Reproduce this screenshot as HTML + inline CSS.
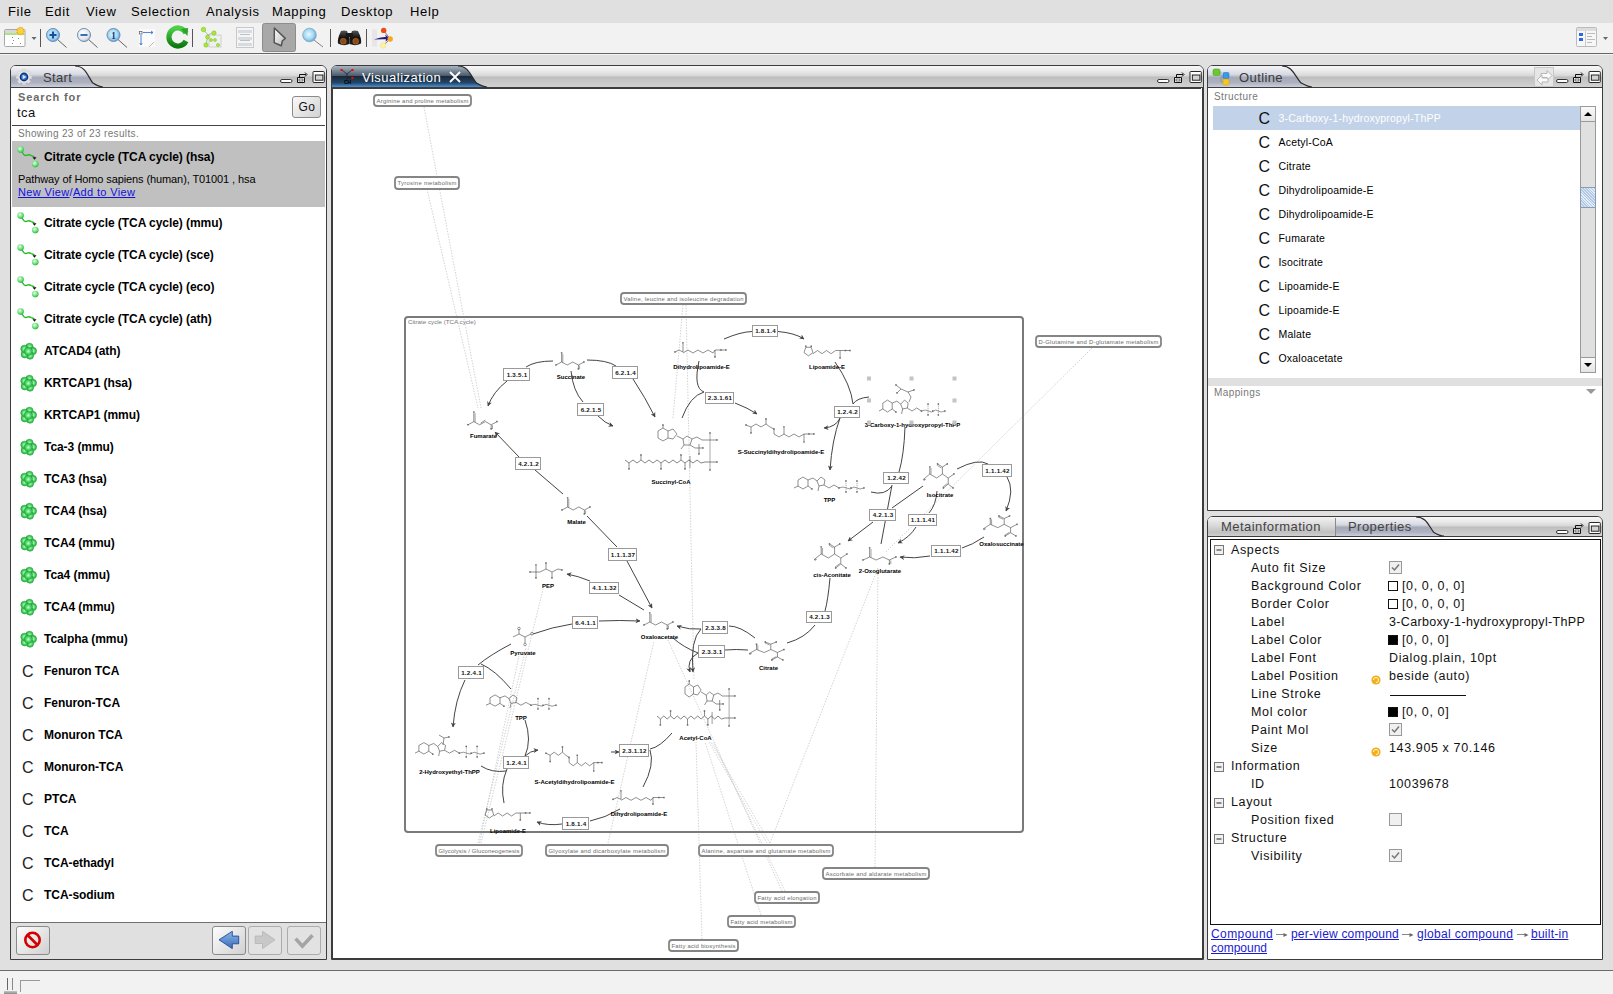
<!DOCTYPE html><html><head><meta charset="utf-8"><style>
*{margin:0;padding:0;box-sizing:border-box}
html,body{width:1613px;height:994px;overflow:hidden;background:#e0e0e0;font-family:"Liberation Sans",sans-serif;position:relative}
.a{position:absolute}
.t{position:absolute;line-height:1;white-space:pre}
svg{position:absolute;overflow:visible}
.hdr{position:absolute;background:linear-gradient(#f8f8f8 0%,#e6e6e6 30%,#d6d6d6 48%,#bdbdbd 52%,#c6c6c6 70%,#d2d2d2 100%)}
.tab{position:absolute}
.btn{position:absolute;border:1px solid #8a8a8a;border-radius:3px;background:linear-gradient(#fbfbfb,#d6d6d6)}
</style></head><body>
<div class="a" style="left:0px;top:0px;width:1613px;height:23px;background:#e0e0e0"></div>
<div class="t" style="left:8px;top:5.00px;font-size:13px;color:#000;letter-spacing:0.65px;">File</div>
<div class="t" style="left:45px;top:5.00px;font-size:13px;color:#000;letter-spacing:0.65px;">Edit</div>
<div class="t" style="left:86px;top:5.00px;font-size:13px;color:#000;letter-spacing:0.65px;">View</div>
<div class="t" style="left:131px;top:5.00px;font-size:13px;color:#000;letter-spacing:0.65px;">Selection</div>
<div class="t" style="left:206px;top:5.00px;font-size:13px;color:#000;letter-spacing:0.65px;">Analysis</div>
<div class="t" style="left:272px;top:5.00px;font-size:13px;color:#000;letter-spacing:0.65px;">Mapping</div>
<div class="t" style="left:341px;top:5.00px;font-size:13px;color:#000;letter-spacing:0.65px;">Desktop</div>
<div class="t" style="left:410px;top:5.00px;font-size:13px;color:#000;letter-spacing:0.65px;">Help</div>
<div class="a" style="left:0px;top:23px;width:1613px;height:30px;background:#f2f2f2"></div>
<div class="a" style="left:0px;top:53px;width:1613px;height:1px;background:#666"></div>
<div class="a" style="left:0px;top:54px;width:1613px;height:1px;background:#f4f4f4"></div>
<svg width="1613" height="55" style="left:0;top:0" viewBox="0 0 1613 55"><defs><radialGradient id="lens" cx="45%" cy="45%" r="60%"><stop offset="0" stop-color="#e8f8ff"/><stop offset="0.6" stop-color="#a0d8f4"/><stop offset="1" stop-color="#5a90d0"/></radialGradient><radialGradient id="lens2" cx="40%" cy="35%" r="70%"><stop offset="0" stop-color="#ffffff"/><stop offset="0.7" stop-color="#dde6f0"/><stop offset="1" stop-color="#9aaabb"/></radialGradient><linearGradient id="grn" x1="0" y1="0" x2="0" y2="1"><stop offset="0" stop-color="#4fd04a"/><stop offset="1" stop-color="#0d7a10"/></linearGradient><linearGradient id="selb" x1="0" y1="0" x2="0" y2="1"><stop offset="0" stop-color="#b0b0b0"/><stop offset="1" stop-color="#a4a4a4"/></linearGradient></defs><rect x="4.5" y="29.5" width="20.5" height="17" rx="1" fill="#fff" stroke="#a8a8a8"/><rect x="5" y="30" width="20" height="3" fill="#d8d8d8"/><line x1="5" y1="34" x2="24.5" y2="34" stroke="#7ad030" stroke-width="1.2"/><circle cx="20.5" cy="31" r="3.6" fill="#f7d23a" stroke="#e6a21a" stroke-width="1.2" stroke-dasharray="1.2 1"/><rect x="12" y="37" width="1" height="1" fill="#888"/><rect x="13" y="40" width="1" height="1" fill="#888"/><rect x="12" y="43" width="1" height="1" fill="#888"/><rect x="20" y="43" width="1" height="1" fill="#888"/><rect x="18" y="38" width="1" height="1" fill="#888"/><path d="M31.5 37 h5 l-2.5 3z" fill="#666"/><line x1="40.5" y1="29" x2="40.5" y2="47" stroke="#555"/><line x1="192.5" y1="29" x2="192.5" y2="47" stroke="#555"/><line x1="330.5" y1="29" x2="330.5" y2="47" stroke="#555"/><line x1="366.5" y1="29" x2="366.5" y2="47" stroke="#555"/><line x1="57" y1="39" x2="66.5" y2="47.5" stroke="#555" stroke-width="0.9"/><circle cx="53" cy="35" r="6.5" fill="url(#lens)" stroke="#6f8fb0" stroke-width="1"/><path d="M49.5 35h7M53 31.5v7" stroke="#1a4fa0" stroke-width="2.2"/><line x1="88" y1="39" x2="97.5" y2="47.5" stroke="#555" stroke-width="0.9"/><circle cx="84" cy="35" r="6.5" fill="url(#lens2)" stroke="#6f8fb0" stroke-width="1"/><path d="M80.5 35h7" stroke="#3c6fb0" stroke-width="2"/><line x1="117.5" y1="39" x2="127.0" y2="47.5" stroke="#555" stroke-width="0.9"/><circle cx="113.5" cy="35" r="6.5" fill="url(#lens)" stroke="#6f8fb0" stroke-width="1"/><text x="113.5" y="39" font-size="10" font-weight="bold" text-anchor="middle" fill="#1a3f80" font-family="Liberation Serif">1</text><rect x="139" y="29" width="16" height="18" fill="#fafafa"/><rect x="139.5" y="31.5" width="2.5" height="2.5" fill="#fff" stroke="#666" stroke-width="0.8"/><path d="M143 32.5h10M151 31l2 1.5-2 1.5M141 35v10M139.8 43l1.2 2 1.2-2" stroke="#3a7ad8" fill="none" stroke-width="0.9"/><path d="M149 47l5-5" stroke="#aaa" stroke-width="0.8"/><path d="M186 33 A9 9 0 1 0 186 41" fill="none" stroke="url(#grn)" stroke-width="5.2"/><path d="M181 29 L188 28 L187.5 36 Z" fill="#2aa52a"/><circle cx="177" cy="38" r="3" fill="#f2f2f2"/><path d="M203 29 L208 35 L212 33 M208 35 L206 45 M208 35 L214 40" stroke="#9a9" stroke-width="0.8" fill="none"/><rect x="209" y="35" width="12" height="12" fill="#f0f0f0" stroke="#bbb" stroke-width="0.6"/><circle cx="203.5" cy="29.5" r="2.3" fill="#a8e83a" stroke="#7ac020" stroke-width="0.5"/><circle cx="214" cy="33" r="2.2" fill="#a8e83a" stroke="#7ac020" stroke-width="0.5"/><circle cx="207.5" cy="37" r="2" fill="#a8e83a" stroke="#7ac020" stroke-width="0.5"/><circle cx="206" cy="45" r="2.2" fill="#a8e83a" stroke="#7ac020" stroke-width="0.5"/><circle cx="211" cy="40" r="1.5" fill="#a8e83a" stroke="#7ac020" stroke-width="0.5"/><circle cx="218" cy="45" r="1.6" fill="#a8e83a" stroke="#7ac020" stroke-width="0.5"/><circle cx="215" cy="40" r="1.5" fill="#a8e83a" stroke="#7ac020" stroke-width="0.5"/><rect x="236.5" y="27.5" width="17" height="20" fill="#f5f5f5" stroke="#c8c8c8"/><rect x="238" y="30" width="14" height="3" fill="#d6dbe2"/><rect x="238" y="37" width="14" height="3" fill="#d6dbe2"/><rect x="238" y="43" width="14" height="3" fill="#d6dbe2"/><rect x="240" y="34" width="10" height="1" fill="#c0c0c0"/><rect x="240" y="40" width="10" height="1" fill="#c0c0c0"/><rect x="262.5" y="23.5" width="33" height="28" rx="2" fill="#a8a8a8" stroke="#8c8c8c"/><defs><linearGradient id="ptr" x1="0" y1="0" x2="1" y2="1"><stop offset="0" stop-color="#ffffff"/><stop offset="1" stop-color="#b8b8b8"/></linearGradient></defs><path d="M274.4 28 L285.3 38.4 L282.3 41 L281.3 45.8 L277.8 44.2 L274.2 42.6 Z" fill="url(#ptr)" stroke="#555" stroke-width="1.5" stroke-linejoin="round"/><line x1="314" y1="40" x2="323" y2="47" stroke="#777" stroke-width="0.9"/><circle cx="309.5" cy="35" r="6.8" fill="url(#lens)" stroke="#8ab" stroke-width="0.8"/><defs><linearGradient id="bino" x1="0" y1="0" x2="0" y2="1"><stop offset="0" stop-color="#555"/><stop offset="0.5" stop-color="#111"/><stop offset="1" stop-color="#222"/></linearGradient></defs><path d="M341 31 Q344 30 347 31 L349.5 38 L349.5 44 Q343.5 46.5 338 43.5 Q337 39 341 31 Z" fill="url(#bino)"/><path d="M352 31 Q355 30 358 31 Q362 39 361 43.5 Q355.5 46.5 349.5 44 L349.5 38 Z" fill="url(#bino)"/><rect x="346" y="33" width="7" height="4" fill="#1a1a1a"/><circle cx="343.3" cy="41.2" r="2.9" fill="#8a4a18" stroke="#c07030" stroke-width="0.6"/><circle cx="355.7" cy="41.2" r="2.9" fill="#8a4a18" stroke="#c07030" stroke-width="0.6"/><rect x="372" y="29.5" width="5" height="17" fill="#e6e6e6"/><path d="M383.7 30.4 L390.2 39 L383.2 45.5" stroke="#333" stroke-width="0.6" fill="none"/><path d="M374 39.5 Q381 36.5 386 37 L385 34.5 L390 38.5 L385.5 41.5 L386 39.2 Q380 39 374 39.5 Z" fill="#2a1a80"/><circle cx="383.7" cy="30.4" r="2.7" fill="#f04a10"/><circle cx="390.2" cy="39" r="2.7" fill="#f5a820"/><circle cx="383.2" cy="45.5" r="2.8" fill="#fbf3a0" stroke="#e8d870" stroke-width="0.4"/><rect x="1576.5" y="27.5" width="20" height="19" rx="1" fill="#f7f7f7" stroke="#bbb"/><rect x="1577" y="28" width="19" height="3" fill="#ddd"/><rect x="1579" y="33" width="4" height="3" fill="#2a6ae0"/><rect x="1579" y="38" width="4" height="3" fill="#2a6ae0"/><line x1="1585.5" y1="31" x2="1585.5" y2="46" stroke="#ccc"/><rect x="1587" y="33" width="8" height="1" fill="#bbb"/><rect x="1587" y="36" width="5" height="1" fill="#bbb"/><rect x="1587" y="39" width="8" height="1" fill="#bbb"/><rect x="1587" y="42" width="5" height="1" fill="#bbb"/><path d="M1603 37 h5 l-2.5 3z" fill="#666"/></svg>
<div class="a" style="left:10px;top:65px;width:317px;height:895px;border:1px solid #3c3c3c;border-radius:6px 6px 0 0;background:#fff;overflow:hidden"><div class="hdr" style="left:0;top:0;width:315px;height:22px;border-bottom:1px solid #3c3c3c"></div></div>
<svg width="96" height="21" style="left:11px;top:66px" viewBox="0 0 96 21"><defs><linearGradient id="tgs" x1="0" y1="0" x2="0" y2="1"><stop offset="0" stop-color="#f4f4f8"/><stop offset="0.4" stop-color="#d8dae2"/><stop offset="0.55" stop-color="#a6aab8"/><stop offset="0.8" stop-color="#aeb2c0"/><stop offset="1" stop-color="#ccd0dc"/></linearGradient></defs><path d="M0 21 V5 Q0 0 5 0 H64 C74 0 76 8.4 81.6 16.8 Q88 21 92 21 Z" fill="url(#tgs)"/><path d="M64 0 C74 0 76 8.4 81.6 16.8 Q88 21 92 21" fill="none" stroke="#2a2a2a" stroke-width="1.2"/></svg>
<svg width="20" height="20" style="left:14px;top:67px" viewBox="0 0 20 20"><rect x="8.3" y="2.2" width="3.4" height="4" fill="#e6e6e6" stroke="#c4c4c4" stroke-width="0.5" transform="rotate(0 10 10)"/><rect x="8.3" y="2.2" width="3.4" height="4" fill="#e6e6e6" stroke="#c4c4c4" stroke-width="0.5" transform="rotate(45 10 10)"/><rect x="8.3" y="2.2" width="3.4" height="4" fill="#e6e6e6" stroke="#c4c4c4" stroke-width="0.5" transform="rotate(90 10 10)"/><rect x="8.3" y="2.2" width="3.4" height="4" fill="#e6e6e6" stroke="#c4c4c4" stroke-width="0.5" transform="rotate(135 10 10)"/><rect x="8.3" y="2.2" width="3.4" height="4" fill="#e6e6e6" stroke="#c4c4c4" stroke-width="0.5" transform="rotate(180 10 10)"/><rect x="8.3" y="2.2" width="3.4" height="4" fill="#e6e6e6" stroke="#c4c4c4" stroke-width="0.5" transform="rotate(225 10 10)"/><rect x="8.3" y="2.2" width="3.4" height="4" fill="#e6e6e6" stroke="#c4c4c4" stroke-width="0.5" transform="rotate(270 10 10)"/><rect x="8.3" y="2.2" width="3.4" height="4" fill="#e6e6e6" stroke="#c4c4c4" stroke-width="0.5" transform="rotate(315 10 10)"/><circle cx="10" cy="10" r="6" fill="#ececec" stroke="#c8c8c8" stroke-width="0.5"/><circle cx="10" cy="10" r="4.4" fill="#0a3580"/><circle cx="10" cy="10" r="2.9" fill="#3a70c0"/><path d="M8.6 7.8 L12.4 10 L8.6 12.2 Z" fill="#d8e8f8"/></svg>
<div class="t" style="left:43px;top:71.00px;font-size:13px;color:#3a3a3a;letter-spacing:0.35px;">Start</div>
<svg width="60" height="22" style="left:266px;top:65px" viewBox="0 0 60 22"><rect x="47" y="6.5" width="11.3" height="11" rx="0.8" fill="#fff" stroke="#111" stroke-width="0.9"/><rect x="49.3" y="10" width="7.6" height="5.2" fill="#d4d4d4" stroke="#111" stroke-width="0.9"/><path d="M31.5 12.5h7v5h-7z" fill="#fff" stroke="#111" stroke-width="1"/><path d="M33.5 12.5v-3h4" fill="none" stroke="#111"/><path d="M37 9.5h3 M39 7.5l2 2-2 2" fill="none" stroke="#111" stroke-width="1"/><rect x="33" y="14" width="4" height="2" fill="#fff" stroke="#111" stroke-width="0.6"/><rect x="14.5" y="14.5" width="11.5" height="3" rx="1.5" fill="#fff" stroke="#333" stroke-width="1"/></svg>
<div class="t" style="left:18px;top:91.69px;font-size:11px;color:#6a6a6a;font-weight:bold;letter-spacing:0.9px;">Search for</div>
<div class="t" style="left:17px;top:106.00px;font-size:13px;color:#111;letter-spacing:0.4px;">tca</div>
<div class="btn" style="left:292px;top:96px;width:29px;height:22px;background:linear-gradient(135deg,#fafafa,#d2d2d2)"></div>
<div class="t" style="left:298.5px;top:100.84px;font-size:12px;color:#111;letter-spacing:0.5px;">Go</div>
<div class="a" style="left:12px;top:125px;width:313px;height:1px;background:#444"></div>
<div class="t" style="left:18px;top:128.53px;font-size:10px;color:#777;letter-spacing:0.35px;">Showing 23 of 23 results.</div>
<div class="a" style="left:12px;top:141px;width:313px;height:66px;background:#c0c0c0"></div>
<svg width="26" height="26" style="left:17px;top:145px" viewBox="0 0 26 26"><defs><radialGradient id="pg" cx="40%" cy="35%" r="65%"><stop offset="0" stop-color="#e8ffe8"/><stop offset="0.5" stop-color="#7ee88a"/><stop offset="1" stop-color="#2fb845"/></radialGradient></defs><path d="M4.5 6 C6 8 6.5 11 8.5 10.5 C11 10 12 9 14 10.5 C15.5 11.5 16.5 11 17.5 12" fill="none" stroke="#22bb22" stroke-width="1.4"/><path d="M15.5 12.2 L17.5 14.8 L19.5 12.2z" fill="#111"/><circle cx="3.6" cy="4.6" r="3.3" fill="url(#pg)"/><circle cx="18.3" cy="19.1" r="3.3" fill="url(#pg)"/></svg>
<div class="t" style="left:44px;top:150.84px;font-size:12px;color:#000;font-weight:bold;letter-spacing:-0.06px;">Citrate cycle (TCA cycle) (hsa)</div>
<div class="t" style="left:18px;top:173.69px;font-size:11px;color:#000;letter-spacing:-0.1px;">Pathway of Homo sapiens (human), T01001 , hsa</div>
<div class="t" style="left:18px;top:186.69px;font-size:11px;color:#1010e0;letter-spacing:0.35px;"><span style="text-decoration:underline">New View</span>/<span style="text-decoration:underline">Add to View</span></div>
<svg width="26" height="26" style="left:17px;top:211px" viewBox="0 0 26 26"><defs><radialGradient id="pg" cx="40%" cy="35%" r="65%"><stop offset="0" stop-color="#e8ffe8"/><stop offset="0.5" stop-color="#7ee88a"/><stop offset="1" stop-color="#2fb845"/></radialGradient></defs><path d="M4.5 6 C6 8 6.5 11 8.5 10.5 C11 10 12 9 14 10.5 C15.5 11.5 16.5 11 17.5 12" fill="none" stroke="#22bb22" stroke-width="1.4"/><path d="M15.5 12.2 L17.5 14.8 L19.5 12.2z" fill="#111"/><circle cx="3.6" cy="4.6" r="3.3" fill="url(#pg)"/><circle cx="18.3" cy="19.1" r="3.3" fill="url(#pg)"/></svg>
<div class="t" style="left:44px;top:216.84px;font-size:12px;color:#000;font-weight:bold;letter-spacing:-0.06px;">Citrate cycle (TCA cycle) (mmu)</div>
<svg width="26" height="26" style="left:17px;top:243px" viewBox="0 0 26 26"><defs><radialGradient id="pg" cx="40%" cy="35%" r="65%"><stop offset="0" stop-color="#e8ffe8"/><stop offset="0.5" stop-color="#7ee88a"/><stop offset="1" stop-color="#2fb845"/></radialGradient></defs><path d="M4.5 6 C6 8 6.5 11 8.5 10.5 C11 10 12 9 14 10.5 C15.5 11.5 16.5 11 17.5 12" fill="none" stroke="#22bb22" stroke-width="1.4"/><path d="M15.5 12.2 L17.5 14.8 L19.5 12.2z" fill="#111"/><circle cx="3.6" cy="4.6" r="3.3" fill="url(#pg)"/><circle cx="18.3" cy="19.1" r="3.3" fill="url(#pg)"/></svg>
<div class="t" style="left:44px;top:248.84px;font-size:12px;color:#000;font-weight:bold;letter-spacing:-0.06px;">Citrate cycle (TCA cycle) (sce)</div>
<svg width="26" height="26" style="left:17px;top:275px" viewBox="0 0 26 26"><defs><radialGradient id="pg" cx="40%" cy="35%" r="65%"><stop offset="0" stop-color="#e8ffe8"/><stop offset="0.5" stop-color="#7ee88a"/><stop offset="1" stop-color="#2fb845"/></radialGradient></defs><path d="M4.5 6 C6 8 6.5 11 8.5 10.5 C11 10 12 9 14 10.5 C15.5 11.5 16.5 11 17.5 12" fill="none" stroke="#22bb22" stroke-width="1.4"/><path d="M15.5 12.2 L17.5 14.8 L19.5 12.2z" fill="#111"/><circle cx="3.6" cy="4.6" r="3.3" fill="url(#pg)"/><circle cx="18.3" cy="19.1" r="3.3" fill="url(#pg)"/></svg>
<div class="t" style="left:44px;top:280.84px;font-size:12px;color:#000;font-weight:bold;letter-spacing:-0.06px;">Citrate cycle (TCA cycle) (eco)</div>
<svg width="26" height="26" style="left:17px;top:307px" viewBox="0 0 26 26"><defs><radialGradient id="pg" cx="40%" cy="35%" r="65%"><stop offset="0" stop-color="#e8ffe8"/><stop offset="0.5" stop-color="#7ee88a"/><stop offset="1" stop-color="#2fb845"/></radialGradient></defs><path d="M4.5 6 C6 8 6.5 11 8.5 10.5 C11 10 12 9 14 10.5 C15.5 11.5 16.5 11 17.5 12" fill="none" stroke="#22bb22" stroke-width="1.4"/><path d="M15.5 12.2 L17.5 14.8 L19.5 12.2z" fill="#111"/><circle cx="3.6" cy="4.6" r="3.3" fill="url(#pg)"/><circle cx="18.3" cy="19.1" r="3.3" fill="url(#pg)"/></svg>
<div class="t" style="left:44px;top:312.84px;font-size:12px;color:#000;font-weight:bold;letter-spacing:-0.06px;">Citrate cycle (TCA cycle) (ath)</div>
<svg width="20" height="20" style="left:18.5px;top:341.5px" viewBox="0 0 20 20"><defs><radialGradient id="gg" cx="50%" cy="50%" r="55%"><stop offset="0" stop-color="#c8ffd0"/><stop offset="0.55" stop-color="#4cd466"/><stop offset="1" stop-color="#22a83a"/></radialGradient></defs><circle cx="10.44" cy="4.84" r="3.7" fill="url(#gg)" stroke="#1e9a34" stroke-width="0.5"/><circle cx="13.89" cy="9.01" r="3.7" fill="url(#gg)" stroke="#1e9a34" stroke-width="0.5"/><circle cx="11.00" cy="13.57" r="3.7" fill="url(#gg)" stroke="#1e9a34" stroke-width="0.5"/><circle cx="5.76" cy="12.24" r="3.7" fill="url(#gg)" stroke="#1e9a34" stroke-width="0.5"/><circle cx="5.41" cy="6.84" r="3.7" fill="url(#gg)" stroke="#1e9a34" stroke-width="0.5"/><circle cx="9.3" cy="9.3" r="4.1" fill="url(#gg)" stroke="#1e9a34" stroke-width="0.5"/></svg>
<div class="t" style="left:44px;top:344.84px;font-size:12px;color:#000;font-weight:bold;letter-spacing:-0.06px;">ATCAD4 (ath)</div>
<svg width="20" height="20" style="left:18.5px;top:373.5px" viewBox="0 0 20 20"><defs><radialGradient id="gg" cx="50%" cy="50%" r="55%"><stop offset="0" stop-color="#c8ffd0"/><stop offset="0.55" stop-color="#4cd466"/><stop offset="1" stop-color="#22a83a"/></radialGradient></defs><circle cx="10.44" cy="4.84" r="3.7" fill="url(#gg)" stroke="#1e9a34" stroke-width="0.5"/><circle cx="13.89" cy="9.01" r="3.7" fill="url(#gg)" stroke="#1e9a34" stroke-width="0.5"/><circle cx="11.00" cy="13.57" r="3.7" fill="url(#gg)" stroke="#1e9a34" stroke-width="0.5"/><circle cx="5.76" cy="12.24" r="3.7" fill="url(#gg)" stroke="#1e9a34" stroke-width="0.5"/><circle cx="5.41" cy="6.84" r="3.7" fill="url(#gg)" stroke="#1e9a34" stroke-width="0.5"/><circle cx="9.3" cy="9.3" r="4.1" fill="url(#gg)" stroke="#1e9a34" stroke-width="0.5"/></svg>
<div class="t" style="left:44px;top:376.84px;font-size:12px;color:#000;font-weight:bold;letter-spacing:-0.06px;">KRTCAP1 (hsa)</div>
<svg width="20" height="20" style="left:18.5px;top:405.5px" viewBox="0 0 20 20"><defs><radialGradient id="gg" cx="50%" cy="50%" r="55%"><stop offset="0" stop-color="#c8ffd0"/><stop offset="0.55" stop-color="#4cd466"/><stop offset="1" stop-color="#22a83a"/></radialGradient></defs><circle cx="10.44" cy="4.84" r="3.7" fill="url(#gg)" stroke="#1e9a34" stroke-width="0.5"/><circle cx="13.89" cy="9.01" r="3.7" fill="url(#gg)" stroke="#1e9a34" stroke-width="0.5"/><circle cx="11.00" cy="13.57" r="3.7" fill="url(#gg)" stroke="#1e9a34" stroke-width="0.5"/><circle cx="5.76" cy="12.24" r="3.7" fill="url(#gg)" stroke="#1e9a34" stroke-width="0.5"/><circle cx="5.41" cy="6.84" r="3.7" fill="url(#gg)" stroke="#1e9a34" stroke-width="0.5"/><circle cx="9.3" cy="9.3" r="4.1" fill="url(#gg)" stroke="#1e9a34" stroke-width="0.5"/></svg>
<div class="t" style="left:44px;top:408.84px;font-size:12px;color:#000;font-weight:bold;letter-spacing:-0.06px;">KRTCAP1 (mmu)</div>
<svg width="20" height="20" style="left:18.5px;top:437.5px" viewBox="0 0 20 20"><defs><radialGradient id="gg" cx="50%" cy="50%" r="55%"><stop offset="0" stop-color="#c8ffd0"/><stop offset="0.55" stop-color="#4cd466"/><stop offset="1" stop-color="#22a83a"/></radialGradient></defs><circle cx="10.44" cy="4.84" r="3.7" fill="url(#gg)" stroke="#1e9a34" stroke-width="0.5"/><circle cx="13.89" cy="9.01" r="3.7" fill="url(#gg)" stroke="#1e9a34" stroke-width="0.5"/><circle cx="11.00" cy="13.57" r="3.7" fill="url(#gg)" stroke="#1e9a34" stroke-width="0.5"/><circle cx="5.76" cy="12.24" r="3.7" fill="url(#gg)" stroke="#1e9a34" stroke-width="0.5"/><circle cx="5.41" cy="6.84" r="3.7" fill="url(#gg)" stroke="#1e9a34" stroke-width="0.5"/><circle cx="9.3" cy="9.3" r="4.1" fill="url(#gg)" stroke="#1e9a34" stroke-width="0.5"/></svg>
<div class="t" style="left:44px;top:440.84px;font-size:12px;color:#000;font-weight:bold;letter-spacing:-0.06px;">Tca-3 (mmu)</div>
<svg width="20" height="20" style="left:18.5px;top:469.5px" viewBox="0 0 20 20"><defs><radialGradient id="gg" cx="50%" cy="50%" r="55%"><stop offset="0" stop-color="#c8ffd0"/><stop offset="0.55" stop-color="#4cd466"/><stop offset="1" stop-color="#22a83a"/></radialGradient></defs><circle cx="10.44" cy="4.84" r="3.7" fill="url(#gg)" stroke="#1e9a34" stroke-width="0.5"/><circle cx="13.89" cy="9.01" r="3.7" fill="url(#gg)" stroke="#1e9a34" stroke-width="0.5"/><circle cx="11.00" cy="13.57" r="3.7" fill="url(#gg)" stroke="#1e9a34" stroke-width="0.5"/><circle cx="5.76" cy="12.24" r="3.7" fill="url(#gg)" stroke="#1e9a34" stroke-width="0.5"/><circle cx="5.41" cy="6.84" r="3.7" fill="url(#gg)" stroke="#1e9a34" stroke-width="0.5"/><circle cx="9.3" cy="9.3" r="4.1" fill="url(#gg)" stroke="#1e9a34" stroke-width="0.5"/></svg>
<div class="t" style="left:44px;top:472.84px;font-size:12px;color:#000;font-weight:bold;letter-spacing:-0.06px;">TCA3 (hsa)</div>
<svg width="20" height="20" style="left:18.5px;top:501.5px" viewBox="0 0 20 20"><defs><radialGradient id="gg" cx="50%" cy="50%" r="55%"><stop offset="0" stop-color="#c8ffd0"/><stop offset="0.55" stop-color="#4cd466"/><stop offset="1" stop-color="#22a83a"/></radialGradient></defs><circle cx="10.44" cy="4.84" r="3.7" fill="url(#gg)" stroke="#1e9a34" stroke-width="0.5"/><circle cx="13.89" cy="9.01" r="3.7" fill="url(#gg)" stroke="#1e9a34" stroke-width="0.5"/><circle cx="11.00" cy="13.57" r="3.7" fill="url(#gg)" stroke="#1e9a34" stroke-width="0.5"/><circle cx="5.76" cy="12.24" r="3.7" fill="url(#gg)" stroke="#1e9a34" stroke-width="0.5"/><circle cx="5.41" cy="6.84" r="3.7" fill="url(#gg)" stroke="#1e9a34" stroke-width="0.5"/><circle cx="9.3" cy="9.3" r="4.1" fill="url(#gg)" stroke="#1e9a34" stroke-width="0.5"/></svg>
<div class="t" style="left:44px;top:504.84px;font-size:12px;color:#000;font-weight:bold;letter-spacing:-0.06px;">TCA4 (hsa)</div>
<svg width="20" height="20" style="left:18.5px;top:533.5px" viewBox="0 0 20 20"><defs><radialGradient id="gg" cx="50%" cy="50%" r="55%"><stop offset="0" stop-color="#c8ffd0"/><stop offset="0.55" stop-color="#4cd466"/><stop offset="1" stop-color="#22a83a"/></radialGradient></defs><circle cx="10.44" cy="4.84" r="3.7" fill="url(#gg)" stroke="#1e9a34" stroke-width="0.5"/><circle cx="13.89" cy="9.01" r="3.7" fill="url(#gg)" stroke="#1e9a34" stroke-width="0.5"/><circle cx="11.00" cy="13.57" r="3.7" fill="url(#gg)" stroke="#1e9a34" stroke-width="0.5"/><circle cx="5.76" cy="12.24" r="3.7" fill="url(#gg)" stroke="#1e9a34" stroke-width="0.5"/><circle cx="5.41" cy="6.84" r="3.7" fill="url(#gg)" stroke="#1e9a34" stroke-width="0.5"/><circle cx="9.3" cy="9.3" r="4.1" fill="url(#gg)" stroke="#1e9a34" stroke-width="0.5"/></svg>
<div class="t" style="left:44px;top:536.84px;font-size:12px;color:#000;font-weight:bold;letter-spacing:-0.06px;">TCA4 (mmu)</div>
<svg width="20" height="20" style="left:18.5px;top:565.5px" viewBox="0 0 20 20"><defs><radialGradient id="gg" cx="50%" cy="50%" r="55%"><stop offset="0" stop-color="#c8ffd0"/><stop offset="0.55" stop-color="#4cd466"/><stop offset="1" stop-color="#22a83a"/></radialGradient></defs><circle cx="10.44" cy="4.84" r="3.7" fill="url(#gg)" stroke="#1e9a34" stroke-width="0.5"/><circle cx="13.89" cy="9.01" r="3.7" fill="url(#gg)" stroke="#1e9a34" stroke-width="0.5"/><circle cx="11.00" cy="13.57" r="3.7" fill="url(#gg)" stroke="#1e9a34" stroke-width="0.5"/><circle cx="5.76" cy="12.24" r="3.7" fill="url(#gg)" stroke="#1e9a34" stroke-width="0.5"/><circle cx="5.41" cy="6.84" r="3.7" fill="url(#gg)" stroke="#1e9a34" stroke-width="0.5"/><circle cx="9.3" cy="9.3" r="4.1" fill="url(#gg)" stroke="#1e9a34" stroke-width="0.5"/></svg>
<div class="t" style="left:44px;top:568.84px;font-size:12px;color:#000;font-weight:bold;letter-spacing:-0.06px;">Tca4 (mmu)</div>
<svg width="20" height="20" style="left:18.5px;top:597.5px" viewBox="0 0 20 20"><defs><radialGradient id="gg" cx="50%" cy="50%" r="55%"><stop offset="0" stop-color="#c8ffd0"/><stop offset="0.55" stop-color="#4cd466"/><stop offset="1" stop-color="#22a83a"/></radialGradient></defs><circle cx="10.44" cy="4.84" r="3.7" fill="url(#gg)" stroke="#1e9a34" stroke-width="0.5"/><circle cx="13.89" cy="9.01" r="3.7" fill="url(#gg)" stroke="#1e9a34" stroke-width="0.5"/><circle cx="11.00" cy="13.57" r="3.7" fill="url(#gg)" stroke="#1e9a34" stroke-width="0.5"/><circle cx="5.76" cy="12.24" r="3.7" fill="url(#gg)" stroke="#1e9a34" stroke-width="0.5"/><circle cx="5.41" cy="6.84" r="3.7" fill="url(#gg)" stroke="#1e9a34" stroke-width="0.5"/><circle cx="9.3" cy="9.3" r="4.1" fill="url(#gg)" stroke="#1e9a34" stroke-width="0.5"/></svg>
<div class="t" style="left:44px;top:600.84px;font-size:12px;color:#000;font-weight:bold;letter-spacing:-0.06px;">TCA4 (mmu)</div>
<svg width="20" height="20" style="left:18.5px;top:629.5px" viewBox="0 0 20 20"><defs><radialGradient id="gg" cx="50%" cy="50%" r="55%"><stop offset="0" stop-color="#c8ffd0"/><stop offset="0.55" stop-color="#4cd466"/><stop offset="1" stop-color="#22a83a"/></radialGradient></defs><circle cx="10.44" cy="4.84" r="3.7" fill="url(#gg)" stroke="#1e9a34" stroke-width="0.5"/><circle cx="13.89" cy="9.01" r="3.7" fill="url(#gg)" stroke="#1e9a34" stroke-width="0.5"/><circle cx="11.00" cy="13.57" r="3.7" fill="url(#gg)" stroke="#1e9a34" stroke-width="0.5"/><circle cx="5.76" cy="12.24" r="3.7" fill="url(#gg)" stroke="#1e9a34" stroke-width="0.5"/><circle cx="5.41" cy="6.84" r="3.7" fill="url(#gg)" stroke="#1e9a34" stroke-width="0.5"/><circle cx="9.3" cy="9.3" r="4.1" fill="url(#gg)" stroke="#1e9a34" stroke-width="0.5"/></svg>
<div class="t" style="left:44px;top:632.84px;font-size:12px;color:#000;font-weight:bold;letter-spacing:-0.06px;">Tcalpha (mmu)</div>
<div class="t" style="left:22px;top:664.46px;font-size:16px;color:#222;">C</div>
<div class="t" style="left:44px;top:664.84px;font-size:12px;color:#000;font-weight:bold;letter-spacing:-0.06px;">Fenuron TCA</div>
<div class="t" style="left:22px;top:696.46px;font-size:16px;color:#222;">C</div>
<div class="t" style="left:44px;top:696.84px;font-size:12px;color:#000;font-weight:bold;letter-spacing:-0.06px;">Fenuron-TCA</div>
<div class="t" style="left:22px;top:728.46px;font-size:16px;color:#222;">C</div>
<div class="t" style="left:44px;top:728.84px;font-size:12px;color:#000;font-weight:bold;letter-spacing:-0.06px;">Monuron TCA</div>
<div class="t" style="left:22px;top:760.46px;font-size:16px;color:#222;">C</div>
<div class="t" style="left:44px;top:760.84px;font-size:12px;color:#000;font-weight:bold;letter-spacing:-0.06px;">Monuron-TCA</div>
<div class="t" style="left:22px;top:792.46px;font-size:16px;color:#222;">C</div>
<div class="t" style="left:44px;top:792.84px;font-size:12px;color:#000;font-weight:bold;letter-spacing:-0.06px;">PTCA</div>
<div class="t" style="left:22px;top:824.46px;font-size:16px;color:#222;">C</div>
<div class="t" style="left:44px;top:824.84px;font-size:12px;color:#000;font-weight:bold;letter-spacing:-0.06px;">TCA</div>
<div class="t" style="left:22px;top:856.46px;font-size:16px;color:#222;">C</div>
<div class="t" style="left:44px;top:856.84px;font-size:12px;color:#000;font-weight:bold;letter-spacing:-0.06px;">TCA-ethadyl</div>
<div class="t" style="left:22px;top:888.46px;font-size:16px;color:#222;">C</div>
<div class="t" style="left:44px;top:888.84px;font-size:12px;color:#000;font-weight:bold;letter-spacing:-0.06px;">TCA-sodium</div>
<div class="a" style="left:11px;top:922px;width:315px;height:1px;background:#707070"></div>
<div class="a" style="left:11px;top:923px;width:315px;height:36px;background:#e0e0e0"></div>
<div class="btn" style="left:16px;top:926px;width:34px;height:29px;border-color:#8a8a8a;background:linear-gradient(135deg,#fdfdfd,#d0d0d0)"></div><svg width="34" height="29" style="left:16px;top:926px" viewBox="0 0 34 29"><circle cx="16.5" cy="14" r="7.2" fill="none" stroke="#d40000" stroke-width="2.6"/><path d="M11.5 9 L21.5 19" stroke="#d40000" stroke-width="2.6"/></svg>
<div class="btn" style="left:212px;top:926px;width:34px;height:29px;border-color:#8a8a8a;background:linear-gradient(135deg,#fdfdfd,#d0d0d0)"></div><svg width="34" height="29" style="left:212px;top:926px" viewBox="0 0 34 29"><defs><linearGradient id="bk" x1="0" y1="0" x2="0" y2="1"><stop offset="0" stop-color="#8ab8e8"/><stop offset="1" stop-color="#3a6ab8"/></linearGradient></defs><path d="M7 13.8 L20.3 5.3 V10.1 H26.7 V17.8 H20.3 V22.6 Z" fill="url(#bk)" stroke="#1e4a98" stroke-width="0.9" stroke-linejoin="round"/></svg>
<div class="btn" style="left:248px;top:926px;width:34px;height:29px;border-color:#acacac;background:#e2e2e2"></div><svg width="34" height="29" style="left:248px;top:926px" viewBox="0 0 34 29"><path d="M27 13.8 L14.5 5.3 V10 H7.2 V17.5 H14.5 V22.6 Z" fill="#c8c8c8" stroke="#b4b4b4" stroke-width="0.8" stroke-linejoin="round"/></svg>
<div class="btn" style="left:287px;top:926px;width:34px;height:29px;border-color:#acacac;background:#e2e2e2"></div><svg width="34" height="29" style="left:287px;top:926px" viewBox="0 0 34 29"><path d="M8.6 12.6 L15.4 20.2 L25.5 9.3" fill="none" stroke="#a4a4a4" stroke-width="3.6" stroke-linejoin="miter"/></svg>
<div class="a" style="left:331px;top:65px;width:873px;height:895px;border:1px solid #3c3c3c;border-radius:6px 6px 0 0;background:#fff;overflow:hidden"><div class="hdr" style="left:0;top:0;width:871px;height:22px;border-bottom:1px solid #3c3c3c"></div></div>
<svg width="159" height="21" style="left:332px;top:66px" viewBox="0 0 159 21"><defs><linearGradient id="tgv" x1="0" y1="0" x2="0" y2="1"><stop offset="0" stop-color="#a8b4c0"/><stop offset="0.45" stop-color="#4e5e6e"/><stop offset="0.5" stop-color="#1a2838"/><stop offset="0.8" stop-color="#23466a"/><stop offset="1" stop-color="#4a92d2"/></linearGradient></defs><path d="M0 21 V5 Q0 0 5 0 H126 C136 0 138 8.4 144.2 16.8 Q151 21 155 21 Z" fill="url(#tgv)"/><path d="M126 0 C136 0 138 8.4 144.2 16.8 Q151 21 155 21" fill="none" stroke="#2a2a2a" stroke-width="1.2"/></svg>
<svg width="22" height="20" style="left:337px;top:67px" viewBox="0 0 22 20"><path d="M5 3 L10 7 L15 3 M10 7 V13 M10 11 H14" stroke="#222" stroke-width="0.8" fill="none"/><rect x="3.5" y="2" width="2" height="2" fill="#f00"/><rect x="14.5" y="2" width="2" height="2" fill="#f00"/><rect x="14.5" y="10" width="2" height="2" fill="#f00"/><text x="7" y="17" font-size="5" font-weight="bold" fill="#000" font-family="Liberation Sans">CH</text></svg>
<div class="t" style="left:362px;top:71.00px;font-size:13px;color:#fff;letter-spacing:0.5px;">Visualization</div>
<svg width="14" height="14" style="left:448px;top:70px" viewBox="0 0 14 14"><path d="M2 2 L12 12 M12 2 L2 12" stroke="#fff" stroke-width="1.8"/></svg>
<svg width="60" height="22" style="left:1143px;top:65px" viewBox="0 0 60 22"><rect x="47" y="6.5" width="11.3" height="11" rx="0.8" fill="#fff" stroke="#111" stroke-width="0.9"/><rect x="49.3" y="10" width="7.6" height="5.2" fill="#d4d4d4" stroke="#111" stroke-width="0.9"/><path d="M31.5 12.5h7v5h-7z" fill="#fff" stroke="#111" stroke-width="1"/><path d="M33.5 12.5v-3h4" fill="none" stroke="#111"/><path d="M37 9.5h3 M39 7.5l2 2-2 2" fill="none" stroke="#111" stroke-width="1"/><rect x="33" y="14" width="4" height="2" fill="#fff" stroke="#111" stroke-width="0.6"/><rect x="14.5" y="14.5" width="11.5" height="3" rx="1.5" fill="#fff" stroke="#333" stroke-width="1"/></svg>
<div class="a" style="left:333px;top:88px;width:868px;height:1px;background:#3c3c3c"></div>
<div class="a" style="left:332px;top:88px;width:1px;height:871px;background:#3c3c3c"></div>
<div class="a" style="left:1202px;top:88px;width:1px;height:871px;background:#3c3c3c"></div>
<div class="a" style="left:332px;top:958px;width:871px;height:1px;background:#3c3c3c"></div>
<svg width="868" height="868" style="left:333px;top:89px" viewBox="333 89 868 868" font-family="Liberation Sans"><rect x="333" y="89" width="868" height="868" fill="#fff"/><defs><marker id="ar" viewBox="0 0 10 10" refX="9" refY="5" markerWidth="5" markerHeight="5" orient="auto-start-reverse" markerUnits="userSpaceOnUse"><path d="M0 0 L10 5 L0 10 L3 5 Z" fill="#444"/></marker></defs><line x1="424" y1="107" x2="481" y2="408" stroke="#c4c4c4" stroke-width="0.8" stroke-dasharray="1.4 1.4"/><line x1="427" y1="189" x2="478" y2="408" stroke="#c4c4c4" stroke-width="0.8" stroke-dasharray="1.4 1.4"/><line x1="683" y1="305" x2="673" y2="418" stroke="#c4c4c4" stroke-width="0.8" stroke-dasharray="1.4 1.4"/><line x1="686" y1="305" x2="694" y2="680" stroke="#c4c4c4" stroke-width="0.8" stroke-dasharray="1.4 1.4"/><line x1="1092" y1="348" x2="886" y2="552" stroke="#c4c4c4" stroke-width="0.8" stroke-dasharray="1.4 1.4"/><line x1="481" y1="843" x2="543" y2="589" stroke="#c4c4c4" stroke-width="0.8" stroke-dasharray="1.4 1.4"/><line x1="478" y1="843" x2="526" y2="648" stroke="#c4c4c4" stroke-width="0.8" stroke-dasharray="1.4 1.4"/><line x1="479.5" y1="843" x2="519" y2="656" stroke="#c4c4c4" stroke-width="0.8" stroke-dasharray="1.4 1.4"/><line x1="608" y1="843" x2="654" y2="641" stroke="#c4c4c4" stroke-width="0.8" stroke-dasharray="1.4 1.4"/><line x1="767" y1="843" x2="709" y2="742" stroke="#c4c4c4" stroke-width="0.8" stroke-dasharray="1.4 1.4"/><line x1="770" y1="843" x2="711" y2="742" stroke="#c4c4c4" stroke-width="0.8" stroke-dasharray="1.4 1.4"/><line x1="785" y1="891" x2="713" y2="742" stroke="#c4c4c4" stroke-width="0.8" stroke-dasharray="1.4 1.4"/><line x1="782" y1="891" x2="667" y2="638" stroke="#c4c4c4" stroke-width="0.8" stroke-dasharray="1.4 1.4"/><line x1="770" y1="843" x2="878" y2="568" stroke="#c4c4c4" stroke-width="0.8" stroke-dasharray="1.4 1.4"/><line x1="875" y1="867" x2="878" y2="568" stroke="#c4c4c4" stroke-width="0.8" stroke-dasharray="1.4 1.4"/><line x1="702" y1="939" x2="696" y2="742" stroke="#c4c4c4" stroke-width="0.8" stroke-dasharray="1.4 1.4"/><line x1="761" y1="915" x2="705" y2="742" stroke="#c4c4c4" stroke-width="0.8" stroke-dasharray="1.4 1.4"/><rect x="405" y="317" width="618" height="515" rx="3" fill="none" stroke="#7a7a7a" stroke-width="2"/><text x="408" y="324" font-size="6.2" fill="#777">Citrate cycle (TCA cycle)</text><rect x="374" y="95" width="97" height="11" rx="3" fill="#fff" stroke="#858585" stroke-width="1.8"/><text x="422.5" y="102.8" font-size="5.9" fill="#6a6a6a" text-anchor="middle" textLength="92" lengthAdjust="spacing">Arginine and proline metabolism</text><rect x="395" y="177" width="64" height="12" rx="3" fill="#fff" stroke="#858585" stroke-width="1.8"/><text x="427.0" y="185.3" font-size="5.9" fill="#6a6a6a" text-anchor="middle" textLength="59" lengthAdjust="spacing">Tyrosine metabolism</text><rect x="621" y="293" width="125" height="11" rx="3" fill="#fff" stroke="#858585" stroke-width="1.8"/><text x="683.5" y="300.8" font-size="5.9" fill="#6a6a6a" text-anchor="middle" textLength="120" lengthAdjust="spacing">Valine, leucine and isoleucine degradation</text><rect x="1036" y="336" width="125" height="11" rx="3" fill="#fff" stroke="#858585" stroke-width="1.8"/><text x="1098.5" y="343.8" font-size="5.9" fill="#6a6a6a" text-anchor="middle" textLength="120" lengthAdjust="spacing">D-Glutamine and D-glutamate metabolism</text><rect x="436" y="845" width="86" height="11" rx="3" fill="#fff" stroke="#858585" stroke-width="1.8"/><text x="479.0" y="852.8" font-size="5.9" fill="#6a6a6a" text-anchor="middle" textLength="81" lengthAdjust="spacing">Glycolysis / Gluconeogenesis</text><rect x="546" y="845" width="122" height="11" rx="3" fill="#fff" stroke="#858585" stroke-width="1.8"/><text x="607.0" y="852.8" font-size="5.9" fill="#6a6a6a" text-anchor="middle" textLength="117" lengthAdjust="spacing">Glyoxylate and dicarboxylate metabolism</text><rect x="699" y="845" width="134" height="11" rx="3" fill="#fff" stroke="#858585" stroke-width="1.8"/><text x="766.0" y="852.8" font-size="5.9" fill="#6a6a6a" text-anchor="middle" textLength="129" lengthAdjust="spacing">Alanine, aspartate and glutamate metabolism</text><rect x="823" y="868" width="106" height="11" rx="3" fill="#fff" stroke="#858585" stroke-width="1.8"/><text x="876.0" y="875.8" font-size="5.9" fill="#6a6a6a" text-anchor="middle" textLength="101" lengthAdjust="spacing">Ascorbate and aldarate metabolism</text><rect x="755" y="892" width="64" height="11" rx="3" fill="#fff" stroke="#858585" stroke-width="1.8"/><text x="787.0" y="899.8" font-size="5.9" fill="#6a6a6a" text-anchor="middle" textLength="59" lengthAdjust="spacing">Fatty acid elongation</text><rect x="728" y="916" width="67" height="11" rx="3" fill="#fff" stroke="#858585" stroke-width="1.8"/><text x="761.5" y="923.8" font-size="5.9" fill="#6a6a6a" text-anchor="middle" textLength="62" lengthAdjust="spacing">Fatty acid metabolism</text><rect x="669" y="940" width="69" height="11" rx="3" fill="#fff" stroke="#858585" stroke-width="1.8"/><text x="703.5" y="947.8" font-size="5.9" fill="#6a6a6a" text-anchor="middle" textLength="64" lengthAdjust="spacing">Fatty acid biosynthesis</text><path d="M553 361 Q535 361 526 367" fill="none" stroke="#444" stroke-width="1"/><path d="M507 381 Q493 392 488 406" fill="none" stroke="#444" stroke-width="1" marker-end="url(#ar)"/><path d="M587 360 Q607 360 616 366" fill="none" stroke="#444" stroke-width="1"/><path d="M633 379 Q645 397 655 417" fill="none" stroke="#444" stroke-width="1" marker-end="url(#ar)"/><path d="M571 371 Q573 391 583 402" fill="none" stroke="#444" stroke-width="1"/><path d="M598 416 Q605 423 613 426" fill="none" stroke="#444" stroke-width="1" marker-end="url(#ar)"/><path d="M519 457 L495 432" fill="none" stroke="#444" stroke-width="1" marker-end="url(#ar)"/><path d="M535 470 L563 494" fill="none" stroke="#444" stroke-width="1"/><path d="M724 339 Q740 332 752 331.5" fill="none" stroke="#444" stroke-width="1"/><path d="M778 331.5 Q795 333 804 339" fill="none" stroke="#444" stroke-width="1" marker-end="url(#ar)"/><path d="M699 361 Q693 388 704 392" fill="none" stroke="#444" stroke-width="1"/><path d="M682 418 Q690 396 704 392" fill="none" stroke="#444" stroke-width="1"/><path d="M735 403 Q748 408 757 414" fill="none" stroke="#444" stroke-width="1" marker-end="url(#ar)"/><path d="M835 362 Q851 385 853 404" fill="none" stroke="#444" stroke-width="1"/><path d="M869 397 Q857 398 853 404" fill="none" stroke="#444" stroke-width="1"/><path d="M840 418 Q836 427 824 428" fill="none" stroke="#444" stroke-width="1" marker-end="url(#ar)"/><path d="M840 418 Q832 440 830 470" fill="none" stroke="#444" stroke-width="1" marker-end="url(#ar)"/><path d="M905 427 Q904 455 899 472" fill="none" stroke="#444" stroke-width="1"/><path d="M871 492 Q885 496 892 486" fill="none" stroke="#444" stroke-width="1"/><path d="M892 485 L881 544" fill="none" stroke="#444" stroke-width="1"/><path d="M923 486 L892 508" fill="none" stroke="#444" stroke-width="1"/><path d="M873 522 L848 541" fill="none" stroke="#444" stroke-width="1" marker-end="url(#ar)"/><path d="M957 469 Q978 458 988 464" fill="none" stroke="#444" stroke-width="1"/><path d="M1007 477 Q1015 490 1006 511" fill="none" stroke="#444" stroke-width="1" marker-end="url(#ar)"/><path d="M937 491 Q936 505 929 513" fill="none" stroke="#444" stroke-width="1"/><path d="M916 527 Q910 537 898 543" fill="none" stroke="#444" stroke-width="1" marker-end="url(#ar)"/><path d="M984 537 Q972 545 962 548" fill="none" stroke="#444" stroke-width="1"/><path d="M930 556 Q914 559 900 557" fill="none" stroke="#444" stroke-width="1" marker-end="url(#ar)"/><path d="M830 578 Q828 600 825 611" fill="none" stroke="#444" stroke-width="1"/><path d="M815 625 Q805 638 787 643" fill="none" stroke="#444" stroke-width="1"/><path d="M755 638 Q740 626 729 626" fill="none" stroke="#444" stroke-width="1"/><path d="M701 629 Q690 630 677 626" fill="none" stroke="#444" stroke-width="1" marker-end="url(#ar)"/><path d="M701 629 Q690 640 693 672" fill="none" stroke="#444" stroke-width="1" marker-end="url(#ar)"/><path d="M748 650 Q736 649 725 650" fill="none" stroke="#444" stroke-width="1"/><path d="M698 653 Q683 647 673 638" fill="none" stroke="#444" stroke-width="1"/><path d="M698 653 Q686 660 690 672" fill="none" stroke="#444" stroke-width="1" marker-end="url(#ar)"/><path d="M587 516 L617 547" fill="none" stroke="#444" stroke-width="1"/><path d="M627 561 L652 608" fill="none" stroke="#444" stroke-width="1" marker-end="url(#ar)"/><path d="M644 610 L619 595" fill="none" stroke="#444" stroke-width="1"/><path d="M590 581 Q578 576 567 574" fill="none" stroke="#444" stroke-width="1" marker-end="url(#ar)"/><path d="M533 634 Q552 627 572 624" fill="none" stroke="#444" stroke-width="1"/><path d="M599 621 Q620 620 640 621" fill="none" stroke="#444" stroke-width="1" marker-end="url(#ar)"/><path d="M511 644 Q490 655 478 665" fill="none" stroke="#444" stroke-width="1"/><path d="M511 689 Q495 670 481 664" fill="none" stroke="#444" stroke-width="1"/><path d="M465 680 Q455 700 453 727" fill="none" stroke="#444" stroke-width="1" marker-end="url(#ar)"/><path d="M481 766 Q492 773 506 771" fill="none" stroke="#444" stroke-width="1"/><path d="M507 769 Q500 785 504 803" fill="none" stroke="#444" stroke-width="1"/><path d="M525 720 Q532 740 525 756" fill="none" stroke="#444" stroke-width="1"/><path d="M525 756 Q530 751 538 750" fill="none" stroke="#444" stroke-width="1" marker-end="url(#ar)"/><path d="M672 733 Q660 747 650 749" fill="none" stroke="#444" stroke-width="1"/><path d="M650 750 Q655 765 643 787" fill="none" stroke="#444" stroke-width="1"/><path d="M611 752 l8 0" stroke="#444" marker-end="url(#ar)"/><path d="M620 809 Q605 818 590 821" fill="none" stroke="#444" stroke-width="1"/><path d="M562 824 Q548 826 537 822" fill="none" stroke="#444" stroke-width="1" marker-end="url(#ar)"/><rect x="503.5" y="368.5" width="26" height="12" fill="#fff" stroke="#9a9a9a" stroke-width="1"/><text x="517.0" y="376.8" font-size="6.2" font-weight="bold" fill="#111" text-anchor="middle" letter-spacing="0.25">1.3.5.1</text><rect x="612.5" y="366.5" width="25" height="12" fill="#fff" stroke="#9a9a9a" stroke-width="1"/><text x="625.5" y="374.8" font-size="6.2" font-weight="bold" fill="#111" text-anchor="middle" letter-spacing="0.25">6.2.1.4</text><rect x="577.5" y="403.5" width="26" height="12" fill="#fff" stroke="#9a9a9a" stroke-width="1"/><text x="591.0" y="411.8" font-size="6.2" font-weight="bold" fill="#111" text-anchor="middle" letter-spacing="0.25">6.2.1.5</text><rect x="515.5" y="457.5" width="25" height="12" fill="#fff" stroke="#9a9a9a" stroke-width="1"/><text x="528.5" y="465.8" font-size="6.2" font-weight="bold" fill="#111" text-anchor="middle" letter-spacing="0.25">4.2.1.2</text><rect x="752.5" y="325.5" width="25" height="11" fill="#fff" stroke="#9a9a9a" stroke-width="1"/><text x="765.5" y="333.3" font-size="6.2" font-weight="bold" fill="#111" text-anchor="middle" letter-spacing="0.25">1.8.1.4</text><rect x="705.5" y="392.5" width="28" height="11" fill="#fff" stroke="#9a9a9a" stroke-width="1"/><text x="720.0" y="400.3" font-size="6.2" font-weight="bold" fill="#111" text-anchor="middle" letter-spacing="0.25">2.3.1.61</text><rect x="834.5" y="406.5" width="25" height="11" fill="#fff" stroke="#9a9a9a" stroke-width="1"/><text x="847.5" y="414.3" font-size="6.2" font-weight="bold" fill="#111" text-anchor="middle" letter-spacing="0.25">1.2.4.2</text><rect x="883.5" y="472.5" width="25" height="11" fill="#fff" stroke="#9a9a9a" stroke-width="1"/><text x="896.5" y="480.3" font-size="6.2" font-weight="bold" fill="#111" text-anchor="middle" letter-spacing="0.25">1.2.42</text><rect x="982.5" y="464.5" width="29" height="12" fill="#fff" stroke="#9a9a9a" stroke-width="1"/><text x="997.5" y="472.8" font-size="6.2" font-weight="bold" fill="#111" text-anchor="middle" letter-spacing="0.25">1.1.1.42</text><rect x="869.5" y="509.5" width="26" height="11" fill="#fff" stroke="#9a9a9a" stroke-width="1"/><text x="883.0" y="517.3" font-size="6.2" font-weight="bold" fill="#111" text-anchor="middle" letter-spacing="0.25">4.2.1.3</text><rect x="908.5" y="514.5" width="28" height="11" fill="#fff" stroke="#9a9a9a" stroke-width="1"/><text x="923.0" y="522.3" font-size="6.2" font-weight="bold" fill="#111" text-anchor="middle" letter-spacing="0.25">1.1.1.41</text><rect x="931.5" y="545.5" width="29" height="11" fill="#fff" stroke="#9a9a9a" stroke-width="1"/><text x="946.5" y="553.3" font-size="6.2" font-weight="bold" fill="#111" text-anchor="middle" letter-spacing="0.25">1.1.1.42</text><rect x="608.5" y="548.5" width="28" height="12" fill="#fff" stroke="#9a9a9a" stroke-width="1"/><text x="623.0" y="556.8" font-size="6.2" font-weight="bold" fill="#111" text-anchor="middle" letter-spacing="0.25">1.1.1.37</text><rect x="589.5" y="582.5" width="29" height="11" fill="#fff" stroke="#9a9a9a" stroke-width="1"/><text x="604.5" y="590.3" font-size="6.2" font-weight="bold" fill="#111" text-anchor="middle" letter-spacing="0.25">4.1.1.32</text><rect x="572.5" y="616.5" width="25" height="12" fill="#fff" stroke="#9a9a9a" stroke-width="1"/><text x="585.5" y="624.8" font-size="6.2" font-weight="bold" fill="#111" text-anchor="middle" letter-spacing="0.25">6.4.1.1</text><rect x="458.5" y="666.5" width="25" height="12" fill="#fff" stroke="#9a9a9a" stroke-width="1"/><text x="471.5" y="674.8" font-size="6.2" font-weight="bold" fill="#111" text-anchor="middle" letter-spacing="0.25">1.2.4.1</text><rect x="702.5" y="621.5" width="25" height="12" fill="#fff" stroke="#9a9a9a" stroke-width="1"/><text x="715.5" y="629.8" font-size="6.2" font-weight="bold" fill="#111" text-anchor="middle" letter-spacing="0.25">2.3.3.8</text><rect x="698.5" y="645.5" width="26" height="12" fill="#fff" stroke="#9a9a9a" stroke-width="1"/><text x="712.0" y="653.8" font-size="6.2" font-weight="bold" fill="#111" text-anchor="middle" letter-spacing="0.25">2.3.3.1</text><rect x="806.5" y="611.5" width="25" height="11" fill="#fff" stroke="#9a9a9a" stroke-width="1"/><text x="819.5" y="619.3" font-size="6.2" font-weight="bold" fill="#111" text-anchor="middle" letter-spacing="0.25">4.2.1.3</text><rect x="503.5" y="756.5" width="25" height="12" fill="#fff" stroke="#9a9a9a" stroke-width="1"/><text x="516.5" y="764.8" font-size="6.2" font-weight="bold" fill="#111" text-anchor="middle" letter-spacing="0.25">1.2.4.1</text><rect x="619.5" y="744.5" width="29" height="12" fill="#fff" stroke="#9a9a9a" stroke-width="1"/><text x="634.5" y="752.8" font-size="6.2" font-weight="bold" fill="#111" text-anchor="middle" letter-spacing="0.25">2.3.1.12</text><rect x="562.5" y="817.5" width="26" height="12" fill="#fff" stroke="#9a9a9a" stroke-width="1"/><text x="576.0" y="825.8" font-size="6.2" font-weight="bold" fill="#111" text-anchor="middle" letter-spacing="0.25">1.8.1.4</text><text x="571" y="379" font-size="6" font-weight="bold" fill="#000" text-anchor="middle">Succinate</text><text x="483.5" y="438" font-size="6" font-weight="bold" fill="#000" text-anchor="middle">Fumarate</text><text x="576.5" y="524" font-size="6" font-weight="bold" fill="#000" text-anchor="middle">Malate</text><text x="701.5" y="369" font-size="6" font-weight="bold" fill="#000" text-anchor="middle">Dihydrolipoamide-E</text><text x="827" y="369" font-size="6" font-weight="bold" fill="#000" text-anchor="middle">Lipoamide-E</text><text x="781" y="454" font-size="6" font-weight="bold" fill="#000" text-anchor="middle">S-Succinyldihydrolipoamide-E</text><text x="671" y="484" font-size="6" font-weight="bold" fill="#000" text-anchor="middle">Succinyl-CoA</text><text x="912.5" y="427" font-size="6" font-weight="bold" fill="#000" text-anchor="middle">3-Carboxy-1-hydroxypropyl-ThPP</text><text x="829.5" y="502" font-size="6" font-weight="bold" fill="#000" text-anchor="middle">TPP</text><text x="940" y="497" font-size="6" font-weight="bold" fill="#000" text-anchor="middle">Isocitrate</text><text x="1001.5" y="545.5" font-size="6" font-weight="bold" fill="#000" text-anchor="middle">Oxalosuccinate</text><text x="832" y="576.5" font-size="6" font-weight="bold" fill="#000" text-anchor="middle">cis-Aconitate</text><text x="880" y="572.5" font-size="6" font-weight="bold" fill="#000" text-anchor="middle">2-Oxoglutarate</text><text x="548" y="588" font-size="6" font-weight="bold" fill="#000" text-anchor="middle">PEP</text><text x="659.5" y="638.5" font-size="6" font-weight="bold" fill="#000" text-anchor="middle">Oxaloacetate</text><text x="768.5" y="669.5" font-size="6" font-weight="bold" fill="#000" text-anchor="middle">Citrate</text><text x="523" y="655" font-size="6" font-weight="bold" fill="#000" text-anchor="middle">Pyruvate</text><text x="521" y="720" font-size="6" font-weight="bold" fill="#000" text-anchor="middle">TPP</text><text x="449.5" y="773.5" font-size="6" font-weight="bold" fill="#000" text-anchor="middle">2-Hydroxyethyl-ThPP</text><text x="574.5" y="783.5" font-size="6" font-weight="bold" fill="#000" text-anchor="middle">S-Acetyldihydrolipoamide-E</text><text x="695.5" y="740" font-size="6" font-weight="bold" fill="#000" text-anchor="middle">Acetyl-CoA</text><text x="508" y="832.5" font-size="6" font-weight="bold" fill="#000" text-anchor="middle">Lipoamide-E</text><text x="639" y="816" font-size="6" font-weight="bold" fill="#000" text-anchor="middle">Dihydrolipoamide-E</text><polyline points="556.0,365.0 561.6,362.0 567.2,365.0 572.8,362.0 578.4,365.0 584.0,362.0" fill="none" stroke="#444" stroke-width="0.6"/><polyline points="561.6,362.0 561.6,354.0" fill="none" stroke="#444" stroke-width="0.6"/><polyline points="562.8,362.5 562.8,354.0" fill="none" stroke="#444" stroke-width="0.5"/><polyline points="578.4,365.0 578.4,369.0" fill="none" stroke="#444" stroke-width="0.6"/><polyline points="579.6,365.5 579.6,369.0" fill="none" stroke="#444" stroke-width="0.5"/><rect x="555.2" y="364.2" width="1.5" height="1.5" fill="#666"/><rect x="560.9" y="352.2" width="1.5" height="1.5" fill="#666"/><rect x="583.2" y="361.2" width="1.5" height="1.5" fill="#666"/><rect x="577.6" y="368.2" width="1.5" height="1.5" fill="#666"/><polyline points="468.0,424.8 473.8,421.6 479.6,424.8 485.4,421.6 491.2,424.8 497.0,421.6" fill="none" stroke="#444" stroke-width="0.6"/><polyline points="473.8,421.6 473.8,413.1" fill="none" stroke="#444" stroke-width="0.6"/><polyline points="475.1,422.1 475.1,413.1" fill="none" stroke="#444" stroke-width="0.5"/><polyline points="491.2,424.8 491.2,429.0" fill="none" stroke="#444" stroke-width="0.6"/><polyline points="492.5,425.3 492.5,429.0" fill="none" stroke="#444" stroke-width="0.5"/><polyline points="480.6,423.2 485.4,420.0" fill="none" stroke="#444" stroke-width="0.6"/><rect x="467.2" y="424.0" width="1.5" height="1.5" fill="#666"/><rect x="473.1" y="411.3" width="1.5" height="1.5" fill="#666"/><rect x="496.2" y="420.8" width="1.5" height="1.5" fill="#666"/><rect x="490.4" y="428.2" width="1.5" height="1.5" fill="#666"/><polyline points="562.0,510.0 567.6,507.0 573.2,510.0 578.8,507.0 584.4,510.0 590.0,507.0" fill="none" stroke="#444" stroke-width="0.6"/><polyline points="567.6,507.0 567.6,499.0" fill="none" stroke="#444" stroke-width="0.6"/><polyline points="568.8,507.5 568.8,499.0" fill="none" stroke="#444" stroke-width="0.5"/><polyline points="584.4,510.0 584.4,514.0" fill="none" stroke="#444" stroke-width="0.6"/><polyline points="585.6,510.5 585.6,514.0" fill="none" stroke="#444" stroke-width="0.5"/><rect x="561.2" y="509.2" width="1.5" height="1.5" fill="#666"/><rect x="566.9" y="497.2" width="1.5" height="1.5" fill="#666"/><rect x="589.2" y="506.2" width="1.5" height="1.5" fill="#666"/><rect x="583.6" y="513.2" width="1.5" height="1.5" fill="#666"/><polyline points="644.0,625.0 649.8,622.0 655.6,625.0 661.4,622.0 667.2,625.0 673.0,622.0" fill="none" stroke="#444" stroke-width="0.6"/><polyline points="649.8,622.0 649.8,614.0" fill="none" stroke="#444" stroke-width="0.6"/><polyline points="651.1,622.5 651.1,614.0" fill="none" stroke="#444" stroke-width="0.5"/><polyline points="667.2,625.0 667.2,629.0" fill="none" stroke="#444" stroke-width="0.6"/><polyline points="668.5,625.5 668.5,629.0" fill="none" stroke="#444" stroke-width="0.5"/><rect x="643.2" y="624.2" width="1.5" height="1.5" fill="#666"/><rect x="649.0" y="612.2" width="1.5" height="1.5" fill="#666"/><rect x="672.2" y="621.2" width="1.5" height="1.5" fill="#666"/><rect x="666.5" y="628.2" width="1.5" height="1.5" fill="#666"/><polyline points="863.0,560.0 869.6,557.0 876.2,560.0 882.8,557.0 889.4,560.0 896.0,557.0" fill="none" stroke="#444" stroke-width="0.6"/><polyline points="869.6,557.0 869.6,549.0" fill="none" stroke="#444" stroke-width="0.6"/><polyline points="871.0,557.5 871.0,549.0" fill="none" stroke="#444" stroke-width="0.5"/><polyline points="889.4,560.0 889.4,564.0" fill="none" stroke="#444" stroke-width="0.6"/><polyline points="890.8,560.5 890.8,564.0" fill="none" stroke="#444" stroke-width="0.5"/><rect x="862.2" y="559.2" width="1.5" height="1.5" fill="#666"/><rect x="868.9" y="547.2" width="1.5" height="1.5" fill="#666"/><rect x="895.2" y="556.2" width="1.5" height="1.5" fill="#666"/><rect x="888.6" y="563.2" width="1.5" height="1.5" fill="#666"/><polyline points="530.0,572.0 540.0,572.0" fill="none" stroke="#444" stroke-width="0.6"/><polyline points="536.0,566.0 536.0,578.0" fill="none" stroke="#444" stroke-width="0.6"/><polyline points="540.0,572.0 546.0,569.0 552.0,572.0 558.0,569.0 562.0,570.0" fill="none" stroke="#444" stroke-width="0.6"/><polyline points="546.0,569.0 546.0,563.0" fill="none" stroke="#444" stroke-width="0.6"/><polyline points="552.0,572.0 552.0,578.0" fill="none" stroke="#444" stroke-width="0.6"/><rect x="535.2" y="564.2" width="1.5" height="1.5" fill="#666"/><rect x="535.2" y="577.2" width="1.5" height="1.5" fill="#666"/><rect x="545.2" y="562.2" width="1.5" height="1.5" fill="#666"/><rect x="551.2" y="577.2" width="1.5" height="1.5" fill="#666"/><rect x="561.2" y="569.2" width="1.5" height="1.5" fill="#666"/><rect x="529.2" y="571.2" width="1.5" height="1.5" fill="#666"/><polyline points="513.0,637.0 519.0,634.0 525.0,637.0 531.0,634.0" fill="none" stroke="#444" stroke-width="0.6"/><polyline points="519.0,634.0 519.0,629.0" fill="none" stroke="#444" stroke-width="0.6"/><polyline points="525.0,637.0 525.0,643.0" fill="none" stroke="#444" stroke-width="0.6"/><circle cx="519.0" cy="628.5" r="1.3" fill="none" stroke="#555" stroke-width="0.6"/><circle cx="525.0" cy="644.5" r="1.3" fill="none" stroke="#555" stroke-width="0.6"/><circle cx="532.0" cy="633.5" r="1.3" fill="none" stroke="#555" stroke-width="0.6"/><polyline points="751.0,652.5 756.5,649.5 764.2,652.5 770.8,649.5 777.4,652.5 784.0,649.5" fill="none" stroke="#444" stroke-width="0.6"/><polyline points="756.5,649.5 756.5,645.0" fill="none" stroke="#444" stroke-width="0.6"/><polyline points="757.8,649.9 757.8,645.0" fill="none" stroke="#444" stroke-width="0.5"/><polyline points="751.0,652.5 749.9,653.2" fill="none" stroke="#444" stroke-width="0.6"/><polyline points="751.9,653.4 750.5,654.2" fill="none" stroke="#444" stroke-width="0.5"/><polyline points="770.8,649.5 770.8,644.2 765.3,642.0" fill="none" stroke="#444" stroke-width="0.6"/><polyline points="770.8,644.2 776.3,642.0" fill="none" stroke="#444" stroke-width="0.6"/><polyline points="769.7,645.0 764.9,643.0" fill="none" stroke="#444" stroke-width="0.5"/><polyline points="777.4,652.5 777.4,657.0 771.9,660.0" fill="none" stroke="#444" stroke-width="0.6"/><polyline points="777.4,657.0 782.9,660.0" fill="none" stroke="#444" stroke-width="0.6"/><polyline points="776.3,656.6 771.4,659.2" fill="none" stroke="#444" stroke-width="0.5"/><rect x="749.1" y="652.9" width="1.5" height="1.5" fill="#666"/><rect x="755.8" y="643.5" width="1.5" height="1.5" fill="#666"/><rect x="764.5" y="641.2" width="1.5" height="1.5" fill="#666"/><rect x="775.5" y="641.2" width="1.5" height="1.5" fill="#666"/><rect x="783.2" y="648.8" width="1.5" height="1.5" fill="#666"/><rect x="771.1" y="659.2" width="1.5" height="1.5" fill="#666"/><rect x="782.1" y="659.2" width="1.5" height="1.5" fill="#666"/><polyline points="925.0,478.0 929.8,474.0 936.6,478.0 942.4,474.0 948.2,478.0 954.0,474.0" fill="none" stroke="#444" stroke-width="0.6"/><polyline points="929.8,474.0 929.8,468.0" fill="none" stroke="#444" stroke-width="0.6"/><polyline points="931.0,474.5 931.0,468.0" fill="none" stroke="#444" stroke-width="0.5"/><polyline points="925.0,478.0 924.0,479.0" fill="none" stroke="#444" stroke-width="0.6"/><polyline points="925.8,479.2 924.5,480.3" fill="none" stroke="#444" stroke-width="0.5"/><polyline points="942.4,474.0 942.4,467.0 937.6,464.0" fill="none" stroke="#444" stroke-width="0.6"/><polyline points="942.4,467.0 947.2,464.0" fill="none" stroke="#444" stroke-width="0.6"/><polyline points="941.4,468.0 937.2,465.3" fill="none" stroke="#444" stroke-width="0.5"/><polyline points="948.2,478.0 948.2,484.0 943.4,488.0" fill="none" stroke="#444" stroke-width="0.6"/><polyline points="948.2,484.0 953.0,488.0" fill="none" stroke="#444" stroke-width="0.6"/><polyline points="947.2,483.5 942.9,487.0" fill="none" stroke="#444" stroke-width="0.5"/><rect x="923.3" y="478.8" width="1.5" height="1.5" fill="#666"/><rect x="929.1" y="466.2" width="1.5" height="1.5" fill="#666"/><rect x="936.8" y="463.2" width="1.5" height="1.5" fill="#666"/><rect x="946.5" y="463.2" width="1.5" height="1.5" fill="#666"/><rect x="953.2" y="473.2" width="1.5" height="1.5" fill="#666"/><rect x="942.6" y="487.2" width="1.5" height="1.5" fill="#666"/><rect x="952.3" y="487.2" width="1.5" height="1.5" fill="#666"/><polyline points="816.0,558.0 821.2,554.0 828.4,558.0 834.6,554.0 840.8,558.0 847.0,554.0" fill="none" stroke="#444" stroke-width="0.6"/><polyline points="821.2,554.0 821.2,548.0" fill="none" stroke="#444" stroke-width="0.6"/><polyline points="822.4,554.5 822.4,548.0" fill="none" stroke="#444" stroke-width="0.5"/><polyline points="816.0,558.0 815.0,559.0" fill="none" stroke="#444" stroke-width="0.6"/><polyline points="816.8,559.2 815.5,560.3" fill="none" stroke="#444" stroke-width="0.5"/><polyline points="834.6,554.0 834.6,547.0 829.4,544.0" fill="none" stroke="#444" stroke-width="0.6"/><polyline points="834.6,547.0 839.8,544.0" fill="none" stroke="#444" stroke-width="0.6"/><polyline points="833.6,548.0 829.0,545.3" fill="none" stroke="#444" stroke-width="0.5"/><polyline points="840.8,558.0 840.8,564.0 835.6,568.0" fill="none" stroke="#444" stroke-width="0.6"/><polyline points="840.8,564.0 846.0,568.0" fill="none" stroke="#444" stroke-width="0.6"/><polyline points="839.8,563.5 835.1,567.0" fill="none" stroke="#444" stroke-width="0.5"/><rect x="814.2" y="558.8" width="1.5" height="1.5" fill="#666"/><rect x="820.4" y="546.2" width="1.5" height="1.5" fill="#666"/><rect x="828.7" y="543.2" width="1.5" height="1.5" fill="#666"/><rect x="839.0" y="543.2" width="1.5" height="1.5" fill="#666"/><rect x="846.2" y="553.2" width="1.5" height="1.5" fill="#666"/><rect x="834.9" y="567.2" width="1.5" height="1.5" fill="#666"/><rect x="845.2" y="567.2" width="1.5" height="1.5" fill="#666"/><polyline points="985.0,527.7 990.3,524.3 997.8,527.7 1004.2,524.3 1010.6,527.7 1017.0,524.3" fill="none" stroke="#444" stroke-width="0.6"/><polyline points="990.3,524.3 990.3,519.3" fill="none" stroke="#444" stroke-width="0.6"/><polyline points="991.6,524.8 991.6,519.3" fill="none" stroke="#444" stroke-width="0.5"/><polyline points="985.0,527.7 983.9,528.5" fill="none" stroke="#444" stroke-width="0.6"/><polyline points="985.9,528.7 984.5,529.6" fill="none" stroke="#444" stroke-width="0.5"/><polyline points="1004.2,524.3 1004.2,518.5 998.9,516.0" fill="none" stroke="#444" stroke-width="0.6"/><polyline points="1004.2,518.5 1009.5,516.0" fill="none" stroke="#444" stroke-width="0.6"/><polyline points="1003.1,519.3 998.4,517.1" fill="none" stroke="#444" stroke-width="0.5"/><polyline points="1010.6,527.7 1010.6,532.7 1005.3,536.0" fill="none" stroke="#444" stroke-width="0.6"/><polyline points="1010.6,532.7 1015.9,536.0" fill="none" stroke="#444" stroke-width="0.6"/><polyline points="1009.5,532.2 1004.7,535.2" fill="none" stroke="#444" stroke-width="0.5"/><rect x="983.2" y="528.2" width="1.5" height="1.5" fill="#666"/><rect x="989.6" y="517.8" width="1.5" height="1.5" fill="#666"/><rect x="998.1" y="515.2" width="1.5" height="1.5" fill="#666"/><rect x="1008.8" y="515.2" width="1.5" height="1.5" fill="#666"/><rect x="1016.2" y="523.6" width="1.5" height="1.5" fill="#666"/><rect x="1004.5" y="535.2" width="1.5" height="1.5" fill="#666"/><rect x="1015.2" y="535.2" width="1.5" height="1.5" fill="#666"/><polyline points="675.0,352.0 679.0,350.0 683.0,352.0" fill="none" stroke="#444" stroke-width="0.6"/><polyline points="683.0,352.0 683.0,344.0" fill="none" stroke="#444" stroke-width="0.6"/><rect x="674.2" y="351.2" width="1.5" height="1.5" fill="#666"/><rect x="682.2" y="342.2" width="1.5" height="1.5" fill="#666"/><polyline points="683.0,353.0 688.0,350.0 693.0,353.0 698.0,350.0 703.0,353.0 708.0,350.0 713.0,353.0 715.0,350.0" fill="none" stroke="#444" stroke-width="0.6"/><polyline points="715.0,350.0 715.0,357.0" fill="none" stroke="#444" stroke-width="0.6"/><polyline points="715.0,350.0 721.0,350.0 726.0,350.0" fill="none" stroke="#444" stroke-width="0.6"/><rect x="714.2" y="356.2" width="1.5" height="1.5" fill="#666"/><rect x="720.2" y="349.2" width="1.5" height="1.5" fill="#666"/><rect x="725.2" y="349.2" width="1.5" height="1.5" fill="#666"/><polyline points="805.8,347.3 804.0,352.6 808.5,355.8 813.0,352.6 811.2,347.3 805.8,347.3" fill="none" stroke="#444" stroke-width="0.6"/><rect x="805.1" y="345.5" width="1.5" height="1.5" fill="#666"/><rect x="810.5" y="345.5" width="1.5" height="1.5" fill="#666"/><polyline points="813.0,353.7 817.5,350.5 822.0,353.7 826.5,350.5 831.1,353.7 835.6,350.5 840.1,350.5" fill="none" stroke="#444" stroke-width="0.6"/><polyline points="840.1,350.5 840.1,357.9" fill="none" stroke="#444" stroke-width="0.6"/><polyline points="840.1,350.5 845.5,350.5 850.0,350.5" fill="none" stroke="#444" stroke-width="0.6"/><rect x="839.3" y="357.2" width="1.5" height="1.5" fill="#666"/><rect x="844.7" y="349.8" width="1.5" height="1.5" fill="#666"/><rect x="849.2" y="349.8" width="1.5" height="1.5" fill="#666"/><polyline points="746.0,425.0 751.0,427.0 756.0,424.0 761.0,427.0 766.0,424.0 770.0,427.0 774.0,429.0" fill="none" stroke="#444" stroke-width="0.6"/><polyline points="751.0,427.0 751.0,433.0" fill="none" stroke="#444" stroke-width="0.6"/><polyline points="766.0,424.0 766.0,419.0" fill="none" stroke="#444" stroke-width="0.6"/><polyline points="774.0,429.0 774.0,434.0 779.0,437.0 784.0,434.0 784.0,428.0" fill="none" stroke="#444" stroke-width="0.6"/><polyline points="784.0,434.0 789.0,437.0 794.0,434.0 799.0,437.0 804.0,434.0 804.0,441.0" fill="none" stroke="#444" stroke-width="0.6"/><polyline points="804.0,434.0 809.0,434.0 814.0,434.0" fill="none" stroke="#444" stroke-width="0.6"/><rect x="745.2" y="424.2" width="1.5" height="1.5" fill="#666"/><rect x="750.2" y="432.2" width="1.5" height="1.5" fill="#666"/><rect x="765.2" y="418.2" width="1.5" height="1.5" fill="#666"/><rect x="773.2" y="428.2" width="1.5" height="1.5" fill="#666"/><rect x="783.2" y="426.2" width="1.5" height="1.5" fill="#666"/><rect x="803.2" y="441.2" width="1.5" height="1.5" fill="#666"/><rect x="808.2" y="433.2" width="1.5" height="1.5" fill="#666"/><rect x="813.2" y="433.2" width="1.5" height="1.5" fill="#666"/><polyline points="658.0,431.0 663.0,428.0 668.0,431.0 668.0,438.0 663.0,441.0 658.0,438.0 658.0,431.0" fill="none" stroke="#444" stroke-width="0.6"/><polyline points="668.0,431.0 673.0,429.0 677.0,434.0 673.0,439.0 668.0,438.0" fill="none" stroke="#444" stroke-width="0.6"/><polyline points="663.0,428.0 663.0,425.0" fill="none" stroke="#444" stroke-width="0.6"/><polyline points="677.0,436.0 683.0,439.0 687.0,436.0 692.0,439.0 690.0,445.0 684.0,445.0 683.0,439.0" fill="none" stroke="#444" stroke-width="0.6"/><polyline points="684.0,445.0 681.0,449.0" fill="none" stroke="#444" stroke-width="0.6"/><polyline points="690.0,445.0 695.0,448.0 703.0,448.0" fill="none" stroke="#444" stroke-width="0.6"/><polyline points="699.0,444.0 699.0,454.0" fill="none" stroke="#444" stroke-width="0.6"/><polyline points="692.0,439.0 697.0,437.0 702.0,440.0 717.0,440.0" fill="none" stroke="#444" stroke-width="0.6"/><polyline points="710.0,433.0 710.0,470.0" fill="none" stroke="#444" stroke-width="0.45"/><polyline points="625.0,460.0 629.0,463.0 633.0,460.0 637.0,463.0 641.0,460.0 645.0,463.0 649.0,460.0 653.0,463.0 657.0,460.0 661.0,463.0 665.0,460.0 669.0,463.0 673.0,460.0 677.0,463.0 681.0,460.0 685.0,463.0 689.0,460.0 693.0,463.0 697.0,460.0 701.0,463.0 705.0,462.0 717.0,462.0" fill="none" stroke="#444" stroke-width="0.65"/><polyline points="629.0,463.0 629.0,469.0" fill="none" stroke="#444" stroke-width="0.6"/><polyline points="641.0,460.0 641.0,455.0" fill="none" stroke="#444" stroke-width="0.6"/><polyline points="661.0,463.0 661.0,469.0" fill="none" stroke="#444" stroke-width="0.6"/><polyline points="681.0,460.0 681.0,455.0" fill="none" stroke="#444" stroke-width="0.6"/><polyline points="685.0,463.0 685.0,469.0" fill="none" stroke="#444" stroke-width="0.6"/><polyline points="690.0,456.0 690.0,468.0" fill="none" stroke="#444" stroke-width="0.55"/><rect x="662.2" y="424.2" width="1.5" height="1.5" fill="#666"/><rect x="709.2" y="432.2" width="1.5" height="1.5" fill="#666"/><rect x="709.2" y="469.2" width="1.5" height="1.5" fill="#666"/><rect x="716.2" y="439.2" width="1.5" height="1.5" fill="#666"/><rect x="716.2" y="461.2" width="1.5" height="1.5" fill="#666"/><rect x="628.2" y="468.2" width="1.5" height="1.5" fill="#666"/><rect x="640.2" y="454.2" width="1.5" height="1.5" fill="#666"/><rect x="660.2" y="468.2" width="1.5" height="1.5" fill="#666"/><rect x="680.2" y="454.2" width="1.5" height="1.5" fill="#666"/><rect x="684.2" y="468.2" width="1.5" height="1.5" fill="#666"/><rect x="698.2" y="453.2" width="1.5" height="1.5" fill="#666"/><rect x="702.2" y="447.2" width="1.5" height="1.5" fill="#666"/><polyline points="882.8,403.1 887.5,400.1 892.2,403.1 892.2,409.0 887.5,412.0 882.8,409.0 882.8,403.1" fill="none" stroke="#444" stroke-width="0.6"/><polyline points="879.0,411.0 882.8,409.0" fill="none" stroke="#444" stroke-width="0.6"/><polyline points="892.2,409.0 896.0,412.0" fill="none" stroke="#444" stroke-width="0.6"/><polyline points="892.2,403.1 896.9,401.1 900.7,404.1" fill="none" stroke="#444" stroke-width="0.6"/><polyline points="900.7,404.1 904.5,400.1 908.2,403.1 907.3,408.0 902.6,409.0 900.7,404.1" fill="none" stroke="#444" stroke-width="0.6"/><polyline points="902.6,409.0 901.6,414.0" fill="none" stroke="#444" stroke-width="0.6"/><polyline points="907.3,408.0 912.0,411.0 916.7,408.0 921.4,411.0" fill="none" stroke="#444" stroke-width="0.6"/><polyline points="921.4,411.0 925.2,410.0 931.8,412.0 935.6,410.0 941.2,412.0 945.0,411.0" fill="none" stroke="#444" stroke-width="0.55"/><path d="M928.0 404.1V415.0M938.4 404.1V415.0" stroke="#666" stroke-width="0.55" stroke-dasharray="1.2 0.8"/><rect x="927.3" y="403.3" width="1.5" height="1.5" fill="#666"/><rect x="927.3" y="414.2" width="1.5" height="1.5" fill="#666"/><rect x="937.6" y="403.3" width="1.5" height="1.5" fill="#666"/><rect x="937.6" y="414.2" width="1.5" height="1.5" fill="#666"/><rect x="944.2" y="410.3" width="1.5" height="1.5" fill="#666"/><rect x="932.0" y="410.3" width="1.5" height="1.5" fill="#666"/><rect x="920.7" y="410.3" width="1.5" height="1.5" fill="#666"/><rect x="895.2" y="411.3" width="1.5" height="1.5" fill="#666"/><polyline points="909.0,402.0 911.0,397.0 908.0,392.0 901.0,389.0 896.0,385.0" fill="none" stroke="#444" stroke-width="0.6"/><polyline points="901.0,389.0 897.0,393.0" fill="none" stroke="#444" stroke-width="0.6"/><polyline points="908.0,392.0 914.0,390.0" fill="none" stroke="#444" stroke-width="0.6"/><rect x="895.2" y="384.2" width="1.5" height="1.5" fill="#666"/><rect x="896.2" y="392.2" width="1.5" height="1.5" fill="#666"/><rect x="913.2" y="389.2" width="1.5" height="1.5" fill="#666"/><polyline points="798.0,480.0 803.0,477.0 808.0,480.0 808.0,486.0 803.0,489.0 798.0,486.0 798.0,480.0" fill="none" stroke="#444" stroke-width="0.6"/><polyline points="794.0,488.0 798.0,486.0" fill="none" stroke="#444" stroke-width="0.6"/><polyline points="808.0,486.0 812.0,489.0" fill="none" stroke="#444" stroke-width="0.6"/><polyline points="808.0,480.0 813.0,478.0 817.0,481.0" fill="none" stroke="#444" stroke-width="0.6"/><polyline points="817.0,481.0 821.0,477.0 825.0,480.0 824.0,485.0 819.0,486.0 817.0,481.0" fill="none" stroke="#444" stroke-width="0.6"/><polyline points="819.0,486.0 818.0,491.0" fill="none" stroke="#444" stroke-width="0.6"/><polyline points="824.0,485.0 829.0,488.0 834.0,485.0 839.0,488.0" fill="none" stroke="#444" stroke-width="0.6"/><polyline points="839.0,488.0 843.0,487.0 850.0,489.0 854.0,487.0 860.0,489.0 864.0,488.0" fill="none" stroke="#444" stroke-width="0.55"/><path d="M846.0 481.0V492.0M857.0 481.0V492.0" stroke="#666" stroke-width="0.55" stroke-dasharray="1.2 0.8"/><rect x="845.2" y="480.2" width="1.5" height="1.5" fill="#666"/><rect x="845.2" y="491.2" width="1.5" height="1.5" fill="#666"/><rect x="856.2" y="480.2" width="1.5" height="1.5" fill="#666"/><rect x="856.2" y="491.2" width="1.5" height="1.5" fill="#666"/><rect x="863.2" y="487.2" width="1.5" height="1.5" fill="#666"/><rect x="850.2" y="487.2" width="1.5" height="1.5" fill="#666"/><rect x="838.2" y="487.2" width="1.5" height="1.5" fill="#666"/><rect x="811.2" y="488.2" width="1.5" height="1.5" fill="#666"/><polyline points="490.0,697.8 495.0,694.9 500.0,697.8 500.0,703.4 495.0,706.2 490.0,703.4 490.0,697.8" fill="none" stroke="#444" stroke-width="0.6"/><polyline points="486.0,705.2 490.0,703.4" fill="none" stroke="#444" stroke-width="0.6"/><polyline points="500.0,703.4 504.0,706.2" fill="none" stroke="#444" stroke-width="0.6"/><polyline points="500.0,697.8 505.0,695.9 509.0,698.7" fill="none" stroke="#444" stroke-width="0.6"/><polyline points="509.0,698.7 513.0,694.9 517.0,697.8 516.0,702.4 511.0,703.4 509.0,698.7" fill="none" stroke="#444" stroke-width="0.6"/><polyline points="511.0,703.4 510.0,708.1" fill="none" stroke="#444" stroke-width="0.6"/><polyline points="516.0,702.4 521.0,705.2 526.0,702.4 531.0,705.2" fill="none" stroke="#444" stroke-width="0.6"/><polyline points="531.0,705.2 535.0,704.3 542.0,706.2 546.0,704.3 552.0,706.2 556.0,705.2" fill="none" stroke="#444" stroke-width="0.55"/><path d="M538.0 698.7V709.0M549.0 698.7V709.0" stroke="#666" stroke-width="0.55" stroke-dasharray="1.2 0.8"/><rect x="537.2" y="697.9" width="1.5" height="1.5" fill="#666"/><rect x="537.2" y="708.2" width="1.5" height="1.5" fill="#666"/><rect x="548.2" y="697.9" width="1.5" height="1.5" fill="#666"/><rect x="548.2" y="708.2" width="1.5" height="1.5" fill="#666"/><rect x="555.2" y="704.5" width="1.5" height="1.5" fill="#666"/><rect x="542.2" y="704.5" width="1.5" height="1.5" fill="#666"/><rect x="530.2" y="704.5" width="1.5" height="1.5" fill="#666"/><rect x="503.2" y="705.4" width="1.5" height="1.5" fill="#666"/><polyline points="418.9,745.5 423.9,742.6 428.8,745.5 428.8,751.2 423.9,754.1 418.9,751.2 418.9,745.5" fill="none" stroke="#444" stroke-width="0.6"/><polyline points="415.0,753.1 418.9,751.2" fill="none" stroke="#444" stroke-width="0.6"/><polyline points="428.8,751.2 432.7,754.1" fill="none" stroke="#444" stroke-width="0.6"/><polyline points="428.8,745.5 433.7,743.5 437.7,746.4" fill="none" stroke="#444" stroke-width="0.6"/><polyline points="437.7,746.4 441.6,742.6 445.6,745.5 444.6,750.3 439.6,751.2 437.7,746.4" fill="none" stroke="#444" stroke-width="0.6"/><polyline points="439.6,751.2 438.7,756.0" fill="none" stroke="#444" stroke-width="0.6"/><polyline points="444.6,750.3 449.5,753.1 454.4,750.3 459.4,753.1" fill="none" stroke="#444" stroke-width="0.6"/><polyline points="459.4,753.1 463.3,752.2 470.2,754.1 474.1,752.2 480.1,754.1 484.0,753.1" fill="none" stroke="#444" stroke-width="0.55"/><path d="M466.3 746.4V757.0M477.1 746.4V757.0" stroke="#666" stroke-width="0.55" stroke-dasharray="1.2 0.8"/><rect x="465.5" y="745.7" width="1.5" height="1.5" fill="#666"/><rect x="465.5" y="756.2" width="1.5" height="1.5" fill="#666"/><rect x="476.4" y="745.7" width="1.5" height="1.5" fill="#666"/><rect x="476.4" y="756.2" width="1.5" height="1.5" fill="#666"/><rect x="483.2" y="752.4" width="1.5" height="1.5" fill="#666"/><rect x="470.4" y="752.4" width="1.5" height="1.5" fill="#666"/><rect x="458.6" y="752.4" width="1.5" height="1.5" fill="#666"/><rect x="432.0" y="753.4" width="1.5" height="1.5" fill="#666"/><polyline points="443.0,745.0 444.0,738.0 439.0,735.0" fill="none" stroke="#444" stroke-width="0.6"/><polyline points="444.0,738.0 449.0,737.0" fill="none" stroke="#444" stroke-width="0.6"/><rect x="448.2" y="736.2" width="1.5" height="1.5" fill="#666"/><polyline points="546.0,753.2 550.1,755.3 554.2,752.2 558.4,755.3 562.5,752.2 565.8,755.3 569.1,757.4" fill="none" stroke="#444" stroke-width="0.6"/><polyline points="550.1,755.3 550.1,761.6" fill="none" stroke="#444" stroke-width="0.6"/><polyline points="562.5,752.2 562.5,747.0" fill="none" stroke="#444" stroke-width="0.6"/><polyline points="569.1,757.4 569.1,762.6 573.2,765.8 577.3,762.6 577.3,756.4" fill="none" stroke="#444" stroke-width="0.6"/><polyline points="577.3,762.6 581.4,765.8 585.5,762.6 589.6,765.8 593.8,762.6 593.8,769.9" fill="none" stroke="#444" stroke-width="0.6"/><polyline points="593.8,762.6 597.9,762.6 602.0,762.6" fill="none" stroke="#444" stroke-width="0.6"/><rect x="545.2" y="752.5" width="1.5" height="1.5" fill="#666"/><rect x="549.4" y="760.8" width="1.5" height="1.5" fill="#666"/><rect x="561.7" y="746.2" width="1.5" height="1.5" fill="#666"/><rect x="568.3" y="756.7" width="1.5" height="1.5" fill="#666"/><rect x="576.5" y="754.6" width="1.5" height="1.5" fill="#666"/><rect x="593.0" y="770.2" width="1.5" height="1.5" fill="#666"/><rect x="597.1" y="761.9" width="1.5" height="1.5" fill="#666"/><rect x="601.2" y="761.9" width="1.5" height="1.5" fill="#666"/><polyline points="486.8,810.0 485.0,815.0 489.4,818.0 493.8,815.0 492.1,810.0 486.8,810.0" fill="none" stroke="#444" stroke-width="0.6"/><rect x="486.0" y="808.2" width="1.5" height="1.5" fill="#666"/><rect x="491.3" y="808.2" width="1.5" height="1.5" fill="#666"/><polyline points="493.8,816.0 498.2,813.0 502.6,816.0 507.1,813.0 511.5,816.0 515.9,813.0 520.3,813.0" fill="none" stroke="#444" stroke-width="0.6"/><polyline points="520.3,813.0 520.3,820.0" fill="none" stroke="#444" stroke-width="0.6"/><polyline points="520.3,813.0 525.6,813.0 530.0,813.0" fill="none" stroke="#444" stroke-width="0.6"/><rect x="519.5" y="819.2" width="1.5" height="1.5" fill="#666"/><rect x="524.8" y="812.2" width="1.5" height="1.5" fill="#666"/><rect x="529.2" y="812.2" width="1.5" height="1.5" fill="#666"/><polyline points="613.0,799.4 617.0,797.5 621.0,799.4" fill="none" stroke="#444" stroke-width="0.6"/><polyline points="621.0,799.4 621.0,791.9" fill="none" stroke="#444" stroke-width="0.6"/><rect x="612.2" y="798.6" width="1.5" height="1.5" fill="#666"/><rect x="620.2" y="790.2" width="1.5" height="1.5" fill="#666"/><polyline points="621.0,800.3 626.0,797.5 631.0,800.3 636.0,797.5 641.0,800.3 646.0,797.5 651.0,800.3 653.0,797.5" fill="none" stroke="#444" stroke-width="0.6"/><polyline points="653.0,797.5 653.0,804.1" fill="none" stroke="#444" stroke-width="0.6"/><polyline points="653.0,797.5 659.0,797.5 664.0,797.5" fill="none" stroke="#444" stroke-width="0.6"/><rect x="652.2" y="803.3" width="1.5" height="1.5" fill="#666"/><rect x="658.2" y="796.8" width="1.5" height="1.5" fill="#666"/><rect x="663.2" y="796.8" width="1.5" height="1.5" fill="#666"/><polyline points="685.0,687.0 689.2,684.0 693.5,687.0 693.5,694.0 689.2,697.0 685.0,694.0 685.0,687.0" fill="none" stroke="#444" stroke-width="0.6"/><polyline points="693.5,687.0 697.7,685.0 701.1,690.0 697.7,695.0 693.5,694.0" fill="none" stroke="#444" stroke-width="0.6"/><polyline points="689.2,684.0 689.2,681.0" fill="none" stroke="#444" stroke-width="0.6"/><polyline points="701.1,692.0 706.2,695.0 709.6,692.0 713.8,695.0 712.1,701.0 707.0,701.0 706.2,695.0" fill="none" stroke="#444" stroke-width="0.6"/><polyline points="707.0,701.0 704.5,705.0" fill="none" stroke="#444" stroke-width="0.6"/><polyline points="712.1,701.0 716.3,704.0 723.1,704.0" fill="none" stroke="#444" stroke-width="0.6"/><polyline points="719.7,700.0 719.7,710.0" fill="none" stroke="#444" stroke-width="0.6"/><polyline points="713.8,695.0 718.0,693.0 722.3,696.0 735.0,696.0" fill="none" stroke="#444" stroke-width="0.6"/><polyline points="729.1,689.0 729.1,726.0" fill="none" stroke="#444" stroke-width="0.45"/><polyline points="657.0,716.0 660.4,719.0 663.8,716.0 667.2,719.0 670.6,716.0 674.0,719.0 677.3,716.0 680.7,719.0 684.1,716.0 687.5,719.0 690.9,716.0 694.3,719.0 697.7,716.0 701.1,719.0 704.5,716.0 707.9,719.0 711.3,716.0 714.7,719.0 718.0,716.0 721.4,719.0 724.8,718.0 735.0,718.0" fill="none" stroke="#444" stroke-width="0.65"/><polyline points="660.4,719.0 660.4,725.0" fill="none" stroke="#444" stroke-width="0.6"/><polyline points="670.6,716.0 670.6,711.0" fill="none" stroke="#444" stroke-width="0.6"/><polyline points="687.5,719.0 687.5,725.0" fill="none" stroke="#444" stroke-width="0.6"/><polyline points="704.5,716.0 704.5,711.0" fill="none" stroke="#444" stroke-width="0.6"/><polyline points="707.9,719.0 707.9,725.0" fill="none" stroke="#444" stroke-width="0.6"/><polyline points="712.1,712.0 712.1,724.0" fill="none" stroke="#444" stroke-width="0.55"/><rect x="688.5" y="680.2" width="1.5" height="1.5" fill="#666"/><rect x="728.3" y="688.2" width="1.5" height="1.5" fill="#666"/><rect x="728.3" y="725.2" width="1.5" height="1.5" fill="#666"/><rect x="734.2" y="695.2" width="1.5" height="1.5" fill="#666"/><rect x="734.2" y="717.2" width="1.5" height="1.5" fill="#666"/><rect x="659.6" y="724.2" width="1.5" height="1.5" fill="#666"/><rect x="669.8" y="710.2" width="1.5" height="1.5" fill="#666"/><rect x="686.8" y="724.2" width="1.5" height="1.5" fill="#666"/><rect x="703.7" y="710.2" width="1.5" height="1.5" fill="#666"/><rect x="707.1" y="724.2" width="1.5" height="1.5" fill="#666"/><rect x="719.0" y="709.2" width="1.5" height="1.5" fill="#666"/><rect x="722.4" y="703.2" width="1.5" height="1.5" fill="#666"/><rect x="867" y="376.5" width="4" height="4" fill="#c4c4c4"/><rect x="867" y="398.5" width="4" height="4" fill="#c4c4c4"/><rect x="867" y="420.5" width="4" height="4" fill="#c4c4c4"/><rect x="909.5" y="376.5" width="4" height="4" fill="#c4c4c4"/><rect x="909.5" y="420.5" width="4" height="4" fill="#c4c4c4"/><rect x="952.5" y="376.5" width="4" height="4" fill="#c4c4c4"/><rect x="952.5" y="398.5" width="4" height="4" fill="#c4c4c4"/><rect x="952.5" y="420.5" width="4" height="4" fill="#c4c4c4"/></svg>
<div class="a" style="left:1207px;top:65px;width:396px;height:446px;border:1px solid #3c3c3c;border-radius:6px 6px 0 0;background:#fff;overflow:hidden"><div class="hdr" style="left:0;top:0;width:394px;height:22px;border-bottom:1px solid #3c3c3c"></div></div>
<svg width="108" height="21" style="left:1208px;top:66px" viewBox="0 0 108 21"><defs><linearGradient id="tgo" x1="0" y1="0" x2="0" y2="1"><stop offset="0" stop-color="#f4f4f8"/><stop offset="0.4" stop-color="#d8dae2"/><stop offset="0.55" stop-color="#a6aab8"/><stop offset="0.8" stop-color="#aeb2c0"/><stop offset="1" stop-color="#ccd0dc"/></linearGradient></defs><path d="M0 21 V5 Q0 0 5 0 H74 C84 0 86 8.4 92.8 16.8 Q100 21 104 21 Z" fill="url(#tgo)"/><path d="M74 0 C84 0 86 8.4 92.8 16.8 Q100 21 104 21" fill="none" stroke="#2a2a2a" stroke-width="1.2"/></svg>
<svg width="22" height="22" style="left:1211px;top:66px" viewBox="0 0 22 22"><path d="M8.5 6 H10 V16 H12 M10 10 H12" stroke="#888" stroke-width="0.6" fill="none"/><rect x="2" y="3" width="7" height="6.5" rx="1.5" fill="#6cc830" stroke="#3a9a10" stroke-width="0.5"/><rect x="12" y="6.5" width="6" height="6" rx="1.2" fill="#3a9ae8" stroke="#1a6ac0" stroke-width="0.5"/><rect x="12" y="13" width="6" height="6" rx="1.2" fill="#f5c820" stroke="#d09a10" stroke-width="0.5"/></svg>
<div class="t" style="left:1239px;top:71.00px;font-size:13px;color:#3a3a3a;letter-spacing:0.4px;">Outline</div>
<div class="a" style="left:1534px;top:67px;width:20px;height:20px;border:1px solid #c8c8c8;background:#e6e6e6"></div>
<svg width="19" height="19" style="left:1534.5px;top:67px" viewBox="0 0 19 19"><path d="M6 6.5 H12 V3.5 L17 8.5 L12 13.5 V10.5 H6 Z" fill="#fafafa" stroke="#b0b0b0" stroke-width="0.9" stroke-linejoin="round"/><path d="M13 11 H7 V8 L2 13 L7 18 V15 H13 Z" fill="#fafafa" stroke="#b0b0b0" stroke-width="0.9" stroke-linejoin="round"/></svg>
<svg width="60" height="22" style="left:1542px;top:65px" viewBox="0 0 60 22"><rect x="47" y="6.5" width="11.3" height="11" rx="0.8" fill="#fff" stroke="#111" stroke-width="0.9"/><rect x="49.3" y="10" width="7.6" height="5.2" fill="#d4d4d4" stroke="#111" stroke-width="0.9"/><path d="M31.5 12.5h7v5h-7z" fill="#fff" stroke="#111" stroke-width="1"/><path d="M33.5 12.5v-3h4" fill="none" stroke="#111"/><path d="M37 9.5h3 M39 7.5l2 2-2 2" fill="none" stroke="#111" stroke-width="1"/><rect x="33" y="14" width="4" height="2" fill="#fff" stroke="#111" stroke-width="0.6"/><rect x="14.5" y="14.5" width="11.5" height="3" rx="1.5" fill="#fff" stroke="#333" stroke-width="1"/></svg>
<div class="t" style="left:1214px;top:91.53px;font-size:10px;color:#777;letter-spacing:0.4px;">Structure</div>
<div class="a" style="left:1213px;top:106px;width:367px;height:24px;background:#c2d2e8"></div>
<div class="t" style="left:1258.5px;top:111.46px;font-size:16px;color:#111;">C</div>
<div class="t" style="left:1278.5px;top:113.11px;font-size:10.5px;color:#fff;letter-spacing:0.2px;">3-Carboxy-1-hydroxypropyl-ThPP</div>
<div class="t" style="left:1258.5px;top:135.46px;font-size:16px;color:#111;">C</div>
<div class="t" style="left:1278.5px;top:137.11px;font-size:10.5px;color:#000;letter-spacing:0.2px;">Acetyl-CoA</div>
<div class="t" style="left:1258.5px;top:159.46px;font-size:16px;color:#111;">C</div>
<div class="t" style="left:1278.5px;top:161.11px;font-size:10.5px;color:#000;letter-spacing:0.2px;">Citrate</div>
<div class="t" style="left:1258.5px;top:183.46px;font-size:16px;color:#111;">C</div>
<div class="t" style="left:1278.5px;top:185.11px;font-size:10.5px;color:#000;letter-spacing:0.2px;">Dihydrolipoamide-E</div>
<div class="t" style="left:1258.5px;top:207.46px;font-size:16px;color:#111;">C</div>
<div class="t" style="left:1278.5px;top:209.11px;font-size:10.5px;color:#000;letter-spacing:0.2px;">Dihydrolipoamide-E</div>
<div class="t" style="left:1258.5px;top:231.46px;font-size:16px;color:#111;">C</div>
<div class="t" style="left:1278.5px;top:233.11px;font-size:10.5px;color:#000;letter-spacing:0.2px;">Fumarate</div>
<div class="t" style="left:1258.5px;top:255.46px;font-size:16px;color:#111;">C</div>
<div class="t" style="left:1278.5px;top:257.11px;font-size:10.5px;color:#000;letter-spacing:0.2px;">Isocitrate</div>
<div class="t" style="left:1258.5px;top:279.46px;font-size:16px;color:#111;">C</div>
<div class="t" style="left:1278.5px;top:281.11px;font-size:10.5px;color:#000;letter-spacing:0.2px;">Lipoamide-E</div>
<div class="t" style="left:1258.5px;top:303.46px;font-size:16px;color:#111;">C</div>
<div class="t" style="left:1278.5px;top:305.11px;font-size:10.5px;color:#000;letter-spacing:0.2px;">Lipoamide-E</div>
<div class="t" style="left:1258.5px;top:327.46px;font-size:16px;color:#111;">C</div>
<div class="t" style="left:1278.5px;top:329.11px;font-size:10.5px;color:#000;letter-spacing:0.2px;">Malate</div>
<div class="t" style="left:1258.5px;top:351.46px;font-size:16px;color:#111;">C</div>
<div class="t" style="left:1278.5px;top:353.11px;font-size:10.5px;color:#000;letter-spacing:0.2px;">Oxaloacetate</div>
<div class="a" style="left:1580px;top:106px;width:16px;height:267px;background:#e0e0e0;border:1px solid #9a9a9a"></div>
<div class="a" style="left:1580px;top:106px;width:16px;height:16px;background:linear-gradient(#fafafa,#e4e4e4);border:1px solid #9a9a9a"></div>
<div class="a" style="left:1580px;top:357px;width:16px;height:16px;background:linear-gradient(#fafafa,#e4e4e4);border:1px solid #9a9a9a"></div>
<svg width="16" height="16" style="left:1580px;top:106px" viewBox="0 0 16 16"><path d="M4 10 H12 L8 6z" fill="#000"/></svg>
<svg width="16" height="16" style="left:1580px;top:357px" viewBox="0 0 16 16"><path d="M4 6 H12 L8 10z" fill="#000"/></svg>
<div class="a" style="left:1580px;top:187px;width:16px;height:21px;border:1px solid #8a9ab0;background:repeating-linear-gradient(45deg,#b4c8e4 0 1px,#e0ecf8 1px 2px)"></div>
<div class="a" style="left:1208px;top:378px;width:394px;height:8px;background:#e0e0e0"></div>
<div class="t" style="left:1214px;top:387.54px;font-size:10px;color:#777;letter-spacing:0.4px;">Mappings</div>
<svg width="12" height="8" style="left:1585px;top:388px" viewBox="0 0 12 8"><path d="M1 1 H11 L6 6z" fill="#999"/></svg>
<div class="a" style="left:1207px;top:516px;width:396px;height:444px;border:1px solid #3c3c3c;border-radius:6px 6px 0 0;background:#fff;overflow:hidden"><div class="hdr" style="left:0;top:0;width:394px;height:20px;border-bottom:1px solid #3c3c3c"></div></div>
<svg width="240" height="19" style="left:1208px;top:517px" viewBox="0 0 240 19"><defs><linearGradient id="tgp" x1="0" y1="0" x2="0" y2="1"><stop offset="0" stop-color="#f4f4f8"/><stop offset="0.4" stop-color="#d8dae2"/><stop offset="0.55" stop-color="#a6aab8"/><stop offset="0.8" stop-color="#aeb2c0"/><stop offset="1" stop-color="#ccd0dc"/></linearGradient></defs><path d="M0 19 V5 Q0 0 5 0 H208 C218 0 220 7.6000000000000005 225.6 15.200000000000001 Q232 19 236 19 Z" fill="url(#tgp)"/><path d="M208 0 C218 0 220 7.6000000000000005 225.6 15.200000000000001 Q232 19 236 19" fill="none" stroke="#2a2a2a" stroke-width="1.2"/></svg>
<svg width="128" height="19" style="left:1208px;top:517px" viewBox="0 0 128 19"><defs><linearGradient id="mtg" x1="0" y1="0" x2="0" y2="1"><stop offset="0" stop-color="#f2f2f2"/><stop offset="0.5" stop-color="#d6d6d6"/><stop offset="0.8" stop-color="#c0c0c0"/><stop offset="1" stop-color="#d0d0d0"/></linearGradient></defs><path d="M0 19 V5 Q0 0 5 0 H127 V19 Z" fill="url(#mtg)"/><line x1="127.5" y1="1" x2="127.5" y2="19" stroke="#8a8a8a"/></svg>
<div class="t" style="left:1221px;top:520.00px;font-size:13px;color:#444;letter-spacing:0.45px;">Metainformation</div>
<div class="t" style="left:1348px;top:520.00px;font-size:13px;color:#444;letter-spacing:0.45px;">Properties</div>
<svg width="60" height="22" style="left:1542px;top:516px" viewBox="0 0 60 22"><rect x="47" y="6.5" width="11.3" height="11" rx="0.8" fill="#fff" stroke="#111" stroke-width="0.9"/><rect x="49.3" y="10" width="7.6" height="5.2" fill="#d4d4d4" stroke="#111" stroke-width="0.9"/><path d="M31.5 12.5h7v5h-7z" fill="#fff" stroke="#111" stroke-width="1"/><path d="M33.5 12.5v-3h4" fill="none" stroke="#111"/><path d="M37 9.5h3 M39 7.5l2 2-2 2" fill="none" stroke="#111" stroke-width="1"/><rect x="33" y="14" width="4" height="2" fill="#fff" stroke="#111" stroke-width="0.6"/><rect x="14.5" y="14.5" width="11.5" height="3" rx="1.5" fill="#fff" stroke="#333" stroke-width="1"/></svg>
<div class="a" style="left:1210px;top:539px;width:391px;height:386px;border:1px solid #111;background:#fff"></div>
<svg width="10" height="10" style="left:1214px;top:545px" viewBox="0 0 10 10"><rect x="0.5" y="0.5" width="9" height="9" fill="#f0f0f0" stroke="#777"/><path d="M2.5 5h5" stroke="#222"/></svg>
<div class="t" style="left:1231px;top:544.42px;font-size:12.5px;color:#111;letter-spacing:0.62px;">Aspects</div>
<div class="t" style="left:1251px;top:562.42px;font-size:12.5px;color:#111;letter-spacing:0.65px;">Auto fit Size</div>
<svg width="14" height="14" style="left:1389px;top:561px" viewBox="0 0 14 14"><rect x="0.5" y="0.5" width="12" height="12" fill="#f0f0f0" stroke="#999"/><path d="M3 6.5 L5.5 9 L10 3.5" fill="none" stroke="#777" stroke-width="1.5"/></svg>
<div class="t" style="left:1251px;top:580.42px;font-size:12.5px;color:#111;letter-spacing:0.65px;">Background Color</div>
<div class="a" style="left:1388px;top:581px;width:10px;height:10px;background:#fff;border:1px solid #111"></div>
<div class="t" style="left:1402px;top:580.42px;font-size:12.5px;color:#111;letter-spacing:0.62px;">[0, 0, 0, 0]</div>
<div class="t" style="left:1251px;top:598.42px;font-size:12.5px;color:#111;letter-spacing:0.65px;">Border Color</div>
<div class="a" style="left:1388px;top:599px;width:10px;height:10px;background:#fff;border:1px solid #111"></div>
<div class="t" style="left:1402px;top:598.42px;font-size:12.5px;color:#111;letter-spacing:0.62px;">[0, 0, 0, 0]</div>
<div class="t" style="left:1251px;top:616.42px;font-size:12.5px;color:#111;letter-spacing:0.65px;">Label</div>
<div class="t" style="left:1389px;top:616.42px;font-size:12.5px;color:#111;letter-spacing:0.33px;">3-Carboxy-1-hydroxypropyl-ThPP</div>
<div class="t" style="left:1251px;top:634.42px;font-size:12.5px;color:#111;letter-spacing:0.65px;">Label Color</div>
<div class="a" style="left:1388px;top:635px;width:10px;height:10px;background:#000;border:1px solid #111"></div>
<div class="t" style="left:1402px;top:634.42px;font-size:12.5px;color:#111;letter-spacing:0.62px;">[0, 0, 0]</div>
<div class="t" style="left:1251px;top:652.42px;font-size:12.5px;color:#111;letter-spacing:0.65px;">Label Font</div>
<div class="t" style="left:1389px;top:652.42px;font-size:12.5px;color:#111;letter-spacing:0.62px;">Dialog.plain, 10pt</div>
<div class="t" style="left:1251px;top:670.42px;font-size:12.5px;color:#111;letter-spacing:0.65px;">Label Position</div>
<svg width="12" height="12" style="left:1370px;top:674px" viewBox="0 0 12 12"><circle cx="6" cy="6" r="4.6" fill="#f0b020"/><path d="M3.5 6 A2.5 2.5 0 1 1 6 8.5" fill="none" stroke="#fff6c0" stroke-width="1"/></svg>
<div class="t" style="left:1389px;top:670.42px;font-size:12.5px;color:#111;letter-spacing:0.62px;">beside (auto)</div>
<div class="t" style="left:1251px;top:688.42px;font-size:12.5px;color:#111;letter-spacing:0.65px;">Line Stroke</div>
<div class="a" style="left:1390px;top:695px;width:76px;height:1px;background:#111"></div>
<div class="t" style="left:1251px;top:706.42px;font-size:12.5px;color:#111;letter-spacing:0.65px;">Mol color</div>
<div class="a" style="left:1388px;top:707px;width:10px;height:10px;background:#000;border:1px solid #111"></div>
<div class="t" style="left:1402px;top:706.42px;font-size:12.5px;color:#111;letter-spacing:0.62px;">[0, 0, 0]</div>
<div class="t" style="left:1251px;top:724.42px;font-size:12.5px;color:#111;letter-spacing:0.65px;">Paint Mol</div>
<svg width="14" height="14" style="left:1389px;top:723px" viewBox="0 0 14 14"><rect x="0.5" y="0.5" width="12" height="12" fill="#f0f0f0" stroke="#999"/><path d="M3 6.5 L5.5 9 L10 3.5" fill="none" stroke="#777" stroke-width="1.5"/></svg>
<div class="t" style="left:1251px;top:742.42px;font-size:12.5px;color:#111;letter-spacing:0.65px;">Size</div>
<svg width="12" height="12" style="left:1370px;top:746px" viewBox="0 0 12 12"><circle cx="6" cy="6" r="4.6" fill="#f0b020"/><path d="M3.5 6 A2.5 2.5 0 1 1 6 8.5" fill="none" stroke="#fff6c0" stroke-width="1"/></svg>
<div class="t" style="left:1389px;top:742.42px;font-size:12.5px;color:#111;letter-spacing:0.62px;">143.905 x 70.146</div>
<svg width="10" height="10" style="left:1214px;top:762px" viewBox="0 0 10 10"><rect x="0.5" y="0.5" width="9" height="9" fill="#f0f0f0" stroke="#777"/><path d="M2.5 5h5" stroke="#222"/></svg>
<div class="t" style="left:1231px;top:760.42px;font-size:12.5px;color:#111;letter-spacing:0.62px;">Information</div>
<div class="t" style="left:1251px;top:778.42px;font-size:12.5px;color:#111;letter-spacing:0.65px;">ID</div>
<div class="t" style="left:1389px;top:778.42px;font-size:12.5px;color:#111;letter-spacing:0.6px;">10039678</div>
<svg width="10" height="10" style="left:1214px;top:798px" viewBox="0 0 10 10"><rect x="0.5" y="0.5" width="9" height="9" fill="#f0f0f0" stroke="#777"/><path d="M2.5 5h5" stroke="#222"/></svg>
<div class="t" style="left:1231px;top:796.42px;font-size:12.5px;color:#111;letter-spacing:0.62px;">Layout</div>
<div class="t" style="left:1251px;top:814.42px;font-size:12.5px;color:#111;letter-spacing:0.65px;">Position fixed</div>
<svg width="14" height="14" style="left:1389px;top:813px" viewBox="0 0 14 14"><rect x="0.5" y="0.5" width="12" height="12" fill="#f0f0f0" stroke="#999"/></svg>
<svg width="10" height="10" style="left:1214px;top:834px" viewBox="0 0 10 10"><rect x="0.5" y="0.5" width="9" height="9" fill="#f0f0f0" stroke="#777"/><path d="M2.5 5h5" stroke="#222"/></svg>
<div class="t" style="left:1231px;top:832.42px;font-size:12.5px;color:#111;letter-spacing:0.62px;">Structure</div>
<div class="t" style="left:1251px;top:850.42px;font-size:12.5px;color:#111;letter-spacing:0.65px;">Visibility</div>
<svg width="14" height="14" style="left:1389px;top:849px" viewBox="0 0 14 14"><rect x="0.5" y="0.5" width="12" height="12" fill="#f0f0f0" stroke="#999"/><path d="M3 6.5 L5.5 9 L10 3.5" fill="none" stroke="#777" stroke-width="1.5"/></svg>
<div class="t" style="left:1211px;top:927.84px;font-size:12px;color:#1a1ad0;letter-spacing:0.42px;"><u>Compound</u></div>
<div class="t" style="left:1291px;top:927.84px;font-size:12px;color:#1a1ad0;letter-spacing:0.19px;"><u>per-view compound</u></div>
<div class="t" style="left:1417px;top:927.84px;font-size:12px;color:#1a1ad0;letter-spacing:0.33px;"><u>global compound</u></div>
<div class="t" style="left:1531px;top:927.84px;font-size:12px;color:#1a1ad0;letter-spacing:0.25px;"><u>built-in</u></div>
<div class="a" style="left:1276px;top:934px;width:8px;height:1px;background:#888"></div>
<svg width="6" height="6" style="left:1283px;top:931.5px" viewBox="0 0 6 6"><path d="M0.5 1 L4.5 3 L0.5 5z" fill="#666"/></svg>
<div class="a" style="left:1402px;top:934px;width:8px;height:1px;background:#888"></div>
<svg width="6" height="6" style="left:1409px;top:931.5px" viewBox="0 0 6 6"><path d="M0.5 1 L4.5 3 L0.5 5z" fill="#666"/></svg>
<div class="a" style="left:1517px;top:934px;width:8px;height:1px;background:#888"></div>
<svg width="6" height="6" style="left:1524px;top:931.5px" viewBox="0 0 6 6"><path d="M0.5 1 L4.5 3 L0.5 5z" fill="#666"/></svg>
<div class="t" style="left:1211px;top:941.84px;font-size:12px;color:#1a1ad0;letter-spacing:0px;"><u>compound</u></div>
<div class="a" style="left:0px;top:970px;width:1613px;height:1px;background:#6a6a6a"></div>
<div class="a" style="left:0px;top:971px;width:1613px;height:23px;background:#f2f2f2"></div>
<div class="a" style="left:7px;top:978px;width:1px;height:12px;background:#666"></div>
<div class="a" style="left:12px;top:978px;width:1px;height:12px;background:#888"></div>
<div class="a" style="left:4px;top:991px;width:13px;height:3px;background:linear-gradient(#c8c8c8,#888)"></div>
<div class="a" style="left:20px;top:980px;width:20px;height:1px;background:#999"></div>
<div class="a" style="left:20px;top:980px;width:1px;height:12px;background:#999"></div>
</body></html>
